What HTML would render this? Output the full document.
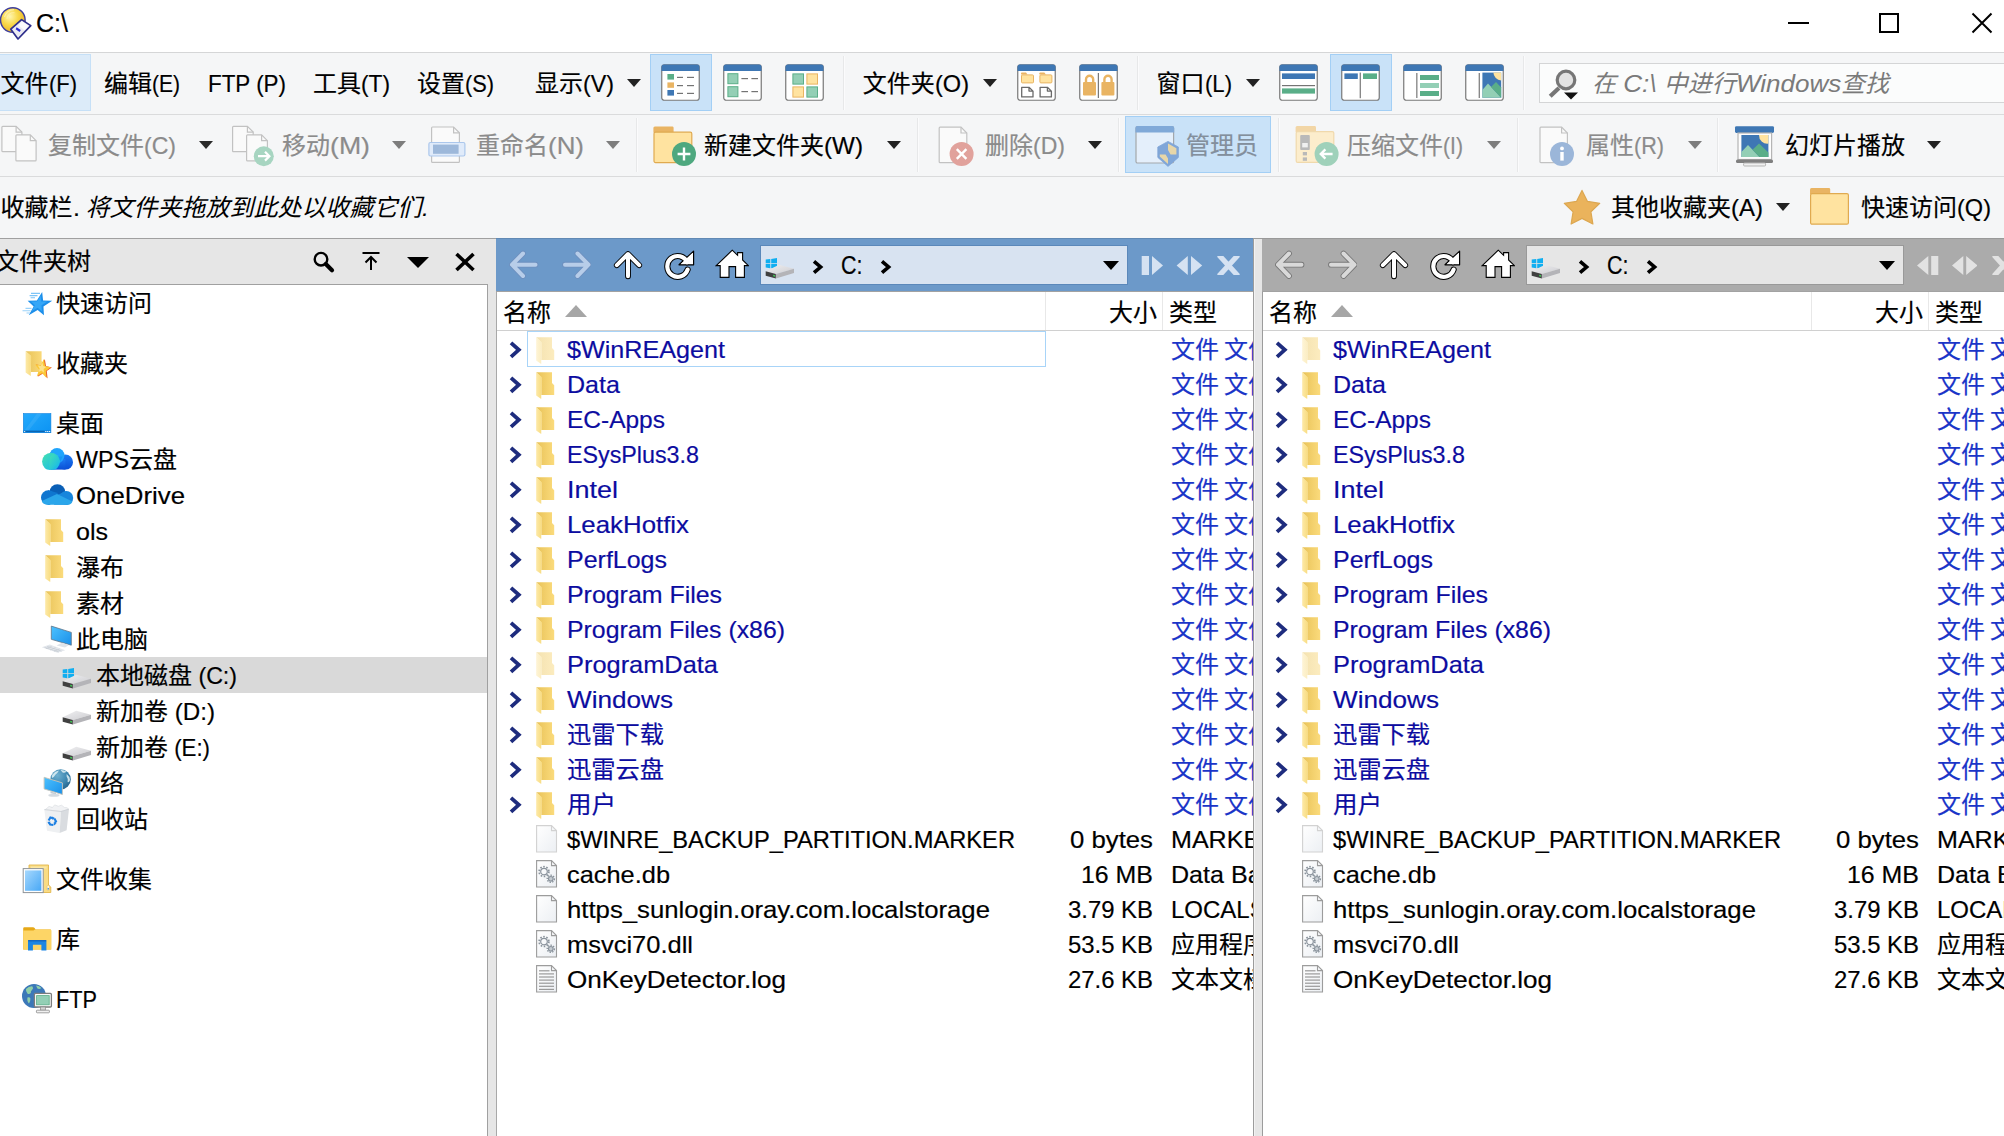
<!DOCTYPE html>
<html lang="zh-CN"><head><meta charset="utf-8"><title>C:\</title><style>
html,body{margin:0;padding:0;}
body{width:2004px;height:1136px;overflow:hidden;background:#fff;position:relative;font-family:'Liberation Sans','Noto Sans CJK SC',sans-serif;font-size:24px;}
.b{position:absolute;box-sizing:border-box;}
.t{position:absolute;height:32px;line-height:32px;white-space:pre;-webkit-text-stroke:0.18px currentColor;}
.r{position:absolute;top:0;transform-origin:0 0;white-space:pre;}
</style></head><body>
<svg width="0" height="0" style="position:absolute"><defs><linearGradient id="gdrv" x1="0" x2="1" y1="0" y2="1"><stop offset="0" stop-color="#f0f0f2"/><stop offset="1" stop-color="#cdcdd1"/></linearGradient></defs></svg><svg width="0" height="0" style="position:absolute"><defs>
<linearGradient id="gfb" x1="0" x2="1" y1="0" y2="0"><stop offset="0" stop-color="#e8c258"/><stop offset="1" stop-color="#fbdb7c"/></linearGradient>
<linearGradient id="gff" x1="0" x2="1" y1="0" y2="0"><stop offset="0" stop-color="#fde9a8"/><stop offset="1" stop-color="#f8dc80"/></linearGradient>
<linearGradient id="ghb" x1="0" x2="1" y1="0" y2="0"><stop offset="0" stop-color="#f4e2b0"/><stop offset="1" stop-color="#fcecbf"/></linearGradient>
<linearGradient id="ghf" x1="0" x2="1" y1="0" y2="0"><stop offset="0" stop-color="#fef4d6"/><stop offset="1" stop-color="#fbedc2"/></linearGradient>
<linearGradient id="gpg" x1="0" x2="1" y1="0" y2="1"><stop offset="0" stop-color="#ffffff"/><stop offset="1" stop-color="#eceff3"/></linearGradient>
</defs></svg><svg width="0" height="0" style="position:absolute"><defs>
<linearGradient id="gwps" x1="0" x2="1" y1="1" y2="0"><stop offset="0" stop-color="#2fe0c0"/><stop offset="0.45" stop-color="#1c9bf0"/><stop offset="1" stop-color="#1f5fe0"/></linearGradient>
<linearGradient id="gdesk" x1="0" x2="1" y1="0" y2="1"><stop offset="0" stop-color="#24aafc"/><stop offset="1" stop-color="#0c93f3"/></linearGradient>
<linearGradient id="gscr" x1="0" x2="1" y1="0" y2="1"><stop offset="0" stop-color="#4cc2ff"/><stop offset="1" stop-color="#1a8fe8"/></linearGradient>
<radialGradient id="gglobe" cx="0.4" cy="0.35" r="0.7"><stop offset="0" stop-color="#8fd0f5"/><stop offset="1" stop-color="#2f7fc0"/></radialGradient>
</defs></svg><svg width="0" height="0" style="position:absolute"><defs><clipPath id="cwps"><rect x="0" y="0" width="32" height="22.8" rx="0"/></clipPath><linearGradient id="gteal" x1="0" x2="1" y1="0" y2="1"><stop offset="0" stop-color="#45e2b0"/><stop offset="1" stop-color="#14b4f0"/></linearGradient><linearGradient id="gwb" x1="0" x2="0" y1="0" y2="1"><stop offset="0" stop-color="#1c7cf2"/><stop offset="1" stop-color="#0a4ed6"/></linearGradient></defs></svg><svg width="0" height="0" style="position:absolute"><defs><radialGradient id="gglb" cx="0.35" cy="0.3" r="0.8"><stop offset="0" stop-color="#6fb0d0"/><stop offset="0.6" stop-color="#3c86b0"/><stop offset="1" stop-color="#245f86"/></radialGradient></defs></svg><svg width="0" height="0" style="position:absolute"><defs><linearGradient id="gfc" x1="0" x2="1" y1="0" y2="1"><stop offset="0" stop-color="#a6d8fd"/><stop offset="1" stop-color="#48a8f6"/></linearGradient></defs></svg><svg width="0" height="0" style="position:absolute"><defs>
<radialGradient id="gdisc" cx="0.38" cy="0.36" r="0.75"><stop offset="0" stop-color="#fff6b0"/><stop offset="0.45" stop-color="#f8d84a"/><stop offset="1" stop-color="#e2a81c"/></radialGradient>
</defs></svg>
<div class="b" style="left:0px;top:0px;width:2004px;height:52px;background:#fff;"></div>
<div class="b" style="left:0px;top:52px;width:2004px;height:1px;background:#d5d6d7;"></div>
<div class="t" style="left:36.00px;top:7.30px;color:#000;font-size:26px;"><span class="r" style="left:0.00px;transform:scaleX(0.9629);">C:\</span></div>
<div class="b" style="left:1788px;top:22px;width:21px;height:2px;background:#000;"></div>
<div class="b" style="left:1879px;top:13px;width:20px;height:20px;border:2px solid #000;"></div>
<svg class="b" style="left:1971px;top:12px;" width="22" height="22" viewBox="0 0 22 22"><path d="M1.5 1.5 L20.5 20.5 M20.5 1.5 L1.5 20.5" stroke="#000" stroke-width="2" fill="none"/></svg>
<div class="b" style="left:0px;top:53px;width:2004px;height:185px;background:#f5f6f7;"></div>
<div class="b" style="left:0px;top:114px;width:2004px;height:1px;background:#dadbdc;"></div>
<div class="b" style="left:0px;top:176px;width:2004px;height:1px;background:#dadbdc;"></div>
<div class="b" style="left:0px;top:54px;width:91px;height:57px;background:#dcebf9;border:1px solid #c6e0f7;border-left:none;"></div>
<div class="t" style="left:0.60px;top:68.00px;color:#000;"><span class="r" style="left:0.00px;">文件</span><span class="r" style="left:48.00px;transform:scaleX(0.9134);">(F)</span></div>
<div class="t" style="left:104.00px;top:68.00px;color:#000;"><span class="r" style="left:0.00px;">编辑</span><span class="r" style="left:48.00px;transform:scaleX(0.8750);">(E)</span></div>
<div class="t" style="left:208.00px;top:68.00px;color:#000;"><span class="r" style="left:0.00px;transform:scaleX(0.9334);">FTP (P)</span></div>
<div class="t" style="left:313.00px;top:68.00px;color:#000;"><span class="r" style="left:0.00px;">工具</span><span class="r" style="left:48.00px;transform:scaleX(0.9460);">(T)</span></div>
<div class="t" style="left:417.00px;top:68.00px;color:#000;"><span class="r" style="left:0.00px;">设置</span><span class="r" style="left:48.00px;transform:scaleX(0.9062);">(S)</span></div>
<div class="t" style="left:535.00px;top:68.00px;color:#000;"><span class="r" style="left:0.00px;">显示</span><span class="r" style="left:48.00px;transform:scaleX(0.9688);">(V)</span></div>
<svg class="b" style="left:627px;top:79px;" width="14" height="8" viewBox="0 0 14 8"><path d="M0 0 H14 L7.0 8 Z" fill="#222"/></svg>
<div class="b" style="left:650px;top:54px;width:62px;height:57px;background:#c9e2f8;border:1px solid #a3cff5;"></div>
<div class="b" style="left:843px;top:56px;width:1px;height:54px;background:#e7e8e9;"></div>
<div class="b" style="left:844px;top:56px;width:1px;height:54px;background:#fbfbfc;"></div>
<div class="t" style="left:862.80px;top:68.00px;color:#000;"><span class="r" style="left:0.00px;">文件夹</span><span class="r" style="left:72.00px;transform:scaleX(0.9811);">(O)</span></div>
<svg class="b" style="left:983px;top:79px;" width="14" height="8" viewBox="0 0 14 8"><path d="M0 0 H14 L7.0 8 Z" fill="#222"/></svg>
<div class="b" style="left:1137px;top:56px;width:1px;height:54px;background:#e7e8e9;"></div>
<div class="b" style="left:1138px;top:56px;width:1px;height:54px;background:#fbfbfc;"></div>
<div class="t" style="left:1156.60px;top:68.00px;color:#000;"><span class="r" style="left:0.00px;">窗口</span><span class="r" style="left:48.00px;transform:scaleX(0.9201);">(L)</span></div>
<svg class="b" style="left:1246px;top:79px;" width="14" height="8" viewBox="0 0 14 8"><path d="M0 0 H14 L7.0 8 Z" fill="#222"/></svg>
<div class="b" style="left:1330px;top:54px;width:62px;height:57px;background:#c9e2f8;border:1px solid #a3cff5;"></div>
<div class="b" style="left:1523px;top:56px;width:1px;height:54px;background:#e7e8e9;"></div>
<div class="b" style="left:1524px;top:56px;width:1px;height:54px;background:#fbfbfc;"></div>
<div class="b" style="left:1539px;top:63px;width:480px;height:40px;background:#fbfcfc;border:1px solid #d4d5d6;"></div>
<div class="t" style="left:1592.00px;top:68.00px;color:#7a7a7a;font-style:italic;-webkit-text-stroke:0;"><span class="r" style="left:0.00px;">在</span><span class="r" style="left:24.00px;transform:scaleX(1.0838);"> C:\ </span><span class="r" style="left:71.70px;">中进行</span><span class="r" style="left:143.70px;transform:scaleX(1.0838);">Windows</span><span class="r" style="left:249.00px;">查找</span></div>
<div class="t" style="left:48.00px;top:130.00px;color:#8b8b8b;"><span class="r" style="left:0.00px;">复制文件</span><span class="r" style="left:96.00px;transform:scaleX(0.9602);">(C)</span></div>
<svg class="b" style="left:199px;top:141px;" width="14" height="8" viewBox="0 0 14 8"><path d="M0 0 H14 L7.0 8 Z" fill="#2a2a2a"/></svg>
<div class="t" style="left:282.00px;top:130.00px;color:#8b8b8b;"><span class="r" style="left:0.00px;">移动</span><span class="r" style="left:48.00px;transform:scaleX(1.1116);">(M)</span></div>
<svg class="b" style="left:392px;top:141px;" width="14" height="8" viewBox="0 0 14 8"><path d="M0 0 H14 L7.0 8 Z" fill="#7d7d7d"/></svg>
<div class="t" style="left:476.00px;top:130.00px;color:#8b8b8b;"><span class="r" style="left:0.00px;">重命名</span><span class="r" style="left:72.00px;transform:scaleX(1.0802);">(N)</span></div>
<svg class="b" style="left:606px;top:141px;" width="14" height="8" viewBox="0 0 14 8"><path d="M0 0 H14 L7.0 8 Z" fill="#7d7d7d"/></svg>
<div class="b" style="left:636px;top:118px;width:1px;height:54px;background:#e7e8e9;"></div>
<div class="b" style="left:637px;top:118px;width:1px;height:54px;background:#fbfbfc;"></div>
<div class="t" style="left:704.00px;top:130.00px;color:#000;"><span class="r" style="left:0.00px;">新建文件夹</span><span class="r" style="left:120.00px;transform:scaleX(1.0093);">(W)</span></div>
<svg class="b" style="left:887px;top:141px;" width="14" height="8" viewBox="0 0 14 8"><path d="M0 0 H14 L7.0 8 Z" fill="#222"/></svg>
<div class="b" style="left:917px;top:118px;width:1px;height:54px;background:#e7e8e9;"></div>
<div class="b" style="left:918px;top:118px;width:1px;height:54px;background:#fbfbfc;"></div>
<div class="t" style="left:985.00px;top:130.00px;color:#8b8b8b;"><span class="r" style="left:0.00px;">删除</span><span class="r" style="left:48.00px;transform:scaleX(0.9602);">(D)</span></div>
<svg class="b" style="left:1088px;top:141px;" width="14" height="8" viewBox="0 0 14 8"><path d="M0 0 H14 L7.0 8 Z" fill="#222"/></svg>
<div class="b" style="left:1118px;top:118px;width:1px;height:54px;background:#e7e8e9;"></div>
<div class="b" style="left:1119px;top:118px;width:1px;height:54px;background:#fbfbfc;"></div>
<div class="b" style="left:1125px;top:116px;width:146px;height:57px;background:#c9e2f8;border:1px solid #a3cff5;"></div>
<div class="t" style="left:1186.00px;top:130.00px;color:#838f9c;"><span class="r" style="left:0.00px;">管理员</span></div>
<div class="b" style="left:1278px;top:118px;width:1px;height:54px;background:#e7e8e9;"></div>
<div class="b" style="left:1279px;top:118px;width:1px;height:54px;background:#fbfbfc;"></div>
<div class="t" style="left:1347.00px;top:130.00px;color:#8b8b8b;"><span class="r" style="left:0.00px;">压缩文件</span><span class="r" style="left:96.00px;transform:scaleX(0.8828);">(I)</span></div>
<svg class="b" style="left:1487px;top:141px;" width="14" height="8" viewBox="0 0 14 8"><path d="M0 0 H14 L7.0 8 Z" fill="#7d7d7d"/></svg>
<div class="b" style="left:1517px;top:118px;width:1px;height:54px;background:#e7e8e9;"></div>
<div class="b" style="left:1518px;top:118px;width:1px;height:54px;background:#fbfbfc;"></div>
<div class="t" style="left:1586.00px;top:130.00px;color:#8b8b8b;"><span class="r" style="left:0.00px;">属性</span><span class="r" style="left:48.00px;transform:scaleX(0.9001);">(R)</span></div>
<svg class="b" style="left:1688px;top:141px;" width="14" height="8" viewBox="0 0 14 8"><path d="M0 0 H14 L7.0 8 Z" fill="#7d7d7d"/></svg>
<div class="b" style="left:1717px;top:118px;width:1px;height:54px;background:#e7e8e9;"></div>
<div class="b" style="left:1718px;top:118px;width:1px;height:54px;background:#fbfbfc;"></div>
<div class="t" style="left:1785.00px;top:130.00px;color:#000;"><span class="r" style="left:0.00px;">幻灯片播放</span></div>
<svg class="b" style="left:1927px;top:141px;" width="14" height="8" viewBox="0 0 14 8"><path d="M0 0 H14 L7.0 8 Z" fill="#222"/></svg>
<div class="t" style="left:0.60px;top:191.50px;color:#000;"><span class="r" style="left:0.00px;">收藏栏</span><span class="r" style="left:72.00px;transform:scaleX(1.0450);">. </span></div>
<div class="t" style="left:85.50px;top:191.50px;color:#000;font-style:italic;-webkit-text-stroke:0;"><span class="r" style="left:0.00px;">将文件夹拖放到此处以收藏它们</span><span class="r" style="left:336.00px;transform:scaleX(1.0450);">.</span></div>
<div class="t" style="left:1611.00px;top:191.50px;color:#000;"><span class="r" style="left:0.00px;">其他收藏夹</span><span class="r" style="left:120.00px;">(A)</span></div>
<svg class="b" style="left:1776px;top:203px;" width="14" height="8" viewBox="0 0 14 8"><path d="M0 0 H14 L7.0 8 Z" fill="#222"/></svg>
<div class="t" style="left:1861.00px;top:191.50px;color:#000;"><span class="r" style="left:0.00px;">快速访问</span><span class="r" style="left:96.00px;transform:scaleX(0.9811);">(Q)</span></div>
<div class="b" style="left:0px;top:238px;width:496px;height:1px;background:#a0a0a0;"></div>
<div class="b" style="left:0px;top:239px;width:496px;height:45px;background:#e6e6e6;"></div>
<div class="b" style="left:0px;top:284px;width:488px;height:1px;background:#a0a0a0;"></div>
<div class="b" style="left:0px;top:285px;width:487px;height:851px;background:#fff;"></div>
<div class="b" style="left:487px;top:284px;width:1px;height:852px;background:#a0a0a0;"></div>
<div class="b" style="left:488px;top:284px;width:8px;height:852px;background:#e6e6e6;"></div>
<div class="b" style="left:496px;top:292px;width:1px;height:844px;background:#a8a8a8;"></div>
<div class="t" style="left:-5.00px;top:245.50px;color:#000;"><span class="r" style="left:0.00px;">文件夹树</span></div>
<div class="b" style="left:0px;top:657px;width:487px;height:36px;background:#d9d9d9;"></div>
<div class="t" style="left:56.00px;top:287.90px;color:#000;"><span class="r" style="left:0.00px;">快速访问</span></div>
<div class="t" style="left:56.00px;top:347.90px;color:#000;"><span class="r" style="left:0.00px;">收藏夹</span></div>
<div class="t" style="left:56.00px;top:407.90px;color:#000;"><span class="r" style="left:0.00px;">桌面</span></div>
<div class="t" style="left:76.00px;top:443.90px;color:#000;"><span class="r" style="left:0.00px;transform:scaleX(0.9694);">WPS</span><span class="r" style="left:53.00px;">云盘</span></div>
<div class="t" style="left:76.00px;top:479.90px;color:#000;"><span class="r" style="left:0.00px;transform:scaleX(1.0752);">OneDrive</span></div>
<div class="t" style="left:76.00px;top:515.90px;color:#000;"><span class="r" style="left:0.00px;transform:scaleX(1.0428);">ols</span></div>
<div class="t" style="left:76.00px;top:551.90px;color:#000;"><span class="r" style="left:0.00px;">瀑布</span></div>
<div class="t" style="left:76.00px;top:587.90px;color:#000;"><span class="r" style="left:0.00px;">素材</span></div>
<div class="t" style="left:76.00px;top:623.90px;color:#000;"><span class="r" style="left:0.00px;">此电脑</span></div>
<div class="t" style="left:96.00px;top:659.90px;color:#000;"><span class="r" style="left:0.00px;">本地磁盘</span><span class="r" style="left:96.00px;transform:scaleX(0.9645);"> (C:)</span></div>
<div class="t" style="left:96.00px;top:695.90px;color:#000;"><span class="r" style="left:0.00px;">新加卷</span><span class="r" style="left:72.00px;transform:scaleX(1.0074);"> (D:)</span></div>
<div class="t" style="left:96.00px;top:731.90px;color:#000;"><span class="r" style="left:0.00px;">新加卷</span><span class="r" style="left:72.00px;transform:scaleX(0.9266);"> (E:)</span></div>
<div class="t" style="left:76.00px;top:767.90px;color:#000;"><span class="r" style="left:0.00px;">网络</span></div>
<div class="t" style="left:76.00px;top:803.90px;color:#000;"><span class="r" style="left:0.00px;">回收站</span></div>
<div class="t" style="left:56.00px;top:863.90px;color:#000;"><span class="r" style="left:0.00px;">文件收集</span></div>
<div class="t" style="left:56.00px;top:923.90px;color:#000;"><span class="r" style="left:0.00px;">库</span></div>
<div class="t" style="left:56.00px;top:983.90px;color:#000;"><span class="r" style="left:0.00px;transform:scaleX(0.9045);">FTP</span></div>
<div class="b" style="left:496px;top:238px;width:757px;height:54px;background:#6c99c9;"></div>
<div class="b" style="left:496px;top:238px;width:757px;height:1px;background:rgba(0,0,0,0.10);"></div>
<div class="b" style="left:496px;top:291px;width:757px;height:1px;background:#a2a2a2;"></div>
<div class="b" style="left:760px;top:245px;width:368px;height:40px;background:#d8e3f1;border:1px solid #5b88ba;"></div>
<div class="t" style="left:840.50px;top:248.70px;color:#000;font-size:26.5px;"><span class="r" style="left:0.00px;transform:scaleX(0.8113);">C:</span></div>
<div class="b" style="left:497px;top:292px;width:756px;height:844px;background:#fff;"></div>
<div class="b" style="left:497px;top:330px;width:756px;height:1px;background:#d0d0d0;"></div>
<div class="b" style="left:1045px;top:292px;width:1px;height:38px;background:#e8e8e8;"></div>
<div class="b" style="left:1162px;top:292px;width:1px;height:38px;background:#e8e8e8;"></div>
<div class="t" style="left:503.00px;top:297.10px;color:#000;"><span class="r" style="left:0.00px;">名称</span></div>
<div class="t" style="left:1109.00px;top:297.10px;color:#000;"><span class="r" style="left:0.00px;">大小</span></div>
<div class="t" style="left:1169.00px;top:297.10px;color:#000;width:84.00px;overflow:hidden;"><span class="r" style="left:0.00px;">类型</span></div>
<svg class="b" style="left:565px;top:305px;" width="22" height="12" viewBox="0 0 22 12"><path d="M0 12 L11 0 L22 12 Z" fill="#a6a6a6"/></svg>
<div class="b" style="left:527px;top:331px;width:519px;height:36px;background:#fff;border:1px solid #a8d4f8;"></div>
<div class="t" style="left:566.50px;top:334.00px;color:#0c0ca0;"><span class="r" style="left:0.00px;transform:scaleX(1.0481);">$WinREAgent</span></div>
<div class="t" style="left:1171.00px;top:334.00px;color:#1a35c8;width:82.00px;overflow:hidden;"><span class="r" style="left:0.00px;">文件</span><span class="r" style="left:48.00px;transform:scaleX(0.7494);"> </span><span class="r" style="left:53.00px;">文件夹</span></div>
<div class="t" style="left:566.50px;top:369.00px;color:#0c0ca0;"><span class="r" style="left:0.00px;transform:scaleX(1.0453);">Data</span></div>
<div class="t" style="left:1171.00px;top:369.00px;color:#1a35c8;width:82.00px;overflow:hidden;"><span class="r" style="left:0.00px;">文件</span><span class="r" style="left:48.00px;transform:scaleX(0.7494);"> </span><span class="r" style="left:53.00px;">文件夹</span></div>
<div class="t" style="left:566.50px;top:404.00px;color:#0c0ca0;"><span class="r" style="left:0.00px;transform:scaleX(1.0203);">EC-Apps</span></div>
<div class="t" style="left:1171.00px;top:404.00px;color:#1a35c8;width:82.00px;overflow:hidden;"><span class="r" style="left:0.00px;">文件</span><span class="r" style="left:48.00px;transform:scaleX(0.7494);"> </span><span class="r" style="left:53.00px;">文件夹</span></div>
<div class="t" style="left:566.50px;top:439.00px;color:#0c0ca0;"><span class="r" style="left:0.00px;transform:scaleX(0.9700);">ESysPlus3.8</span></div>
<div class="t" style="left:1171.00px;top:439.00px;color:#1a35c8;width:82.00px;overflow:hidden;"><span class="r" style="left:0.00px;">文件</span><span class="r" style="left:48.00px;transform:scaleX(0.7494);"> </span><span class="r" style="left:53.00px;">文件夹</span></div>
<div class="t" style="left:566.50px;top:474.00px;color:#0c0ca0;"><span class="r" style="left:0.00px;transform:scaleX(1.1240);">Intel</span></div>
<div class="t" style="left:1171.00px;top:474.00px;color:#1a35c8;width:82.00px;overflow:hidden;"><span class="r" style="left:0.00px;">文件</span><span class="r" style="left:48.00px;transform:scaleX(0.7494);"> </span><span class="r" style="left:53.00px;">文件夹</span></div>
<div class="t" style="left:566.50px;top:509.00px;color:#0c0ca0;"><span class="r" style="left:0.00px;transform:scaleX(1.0759);">LeakHotfix</span></div>
<div class="t" style="left:1171.00px;top:509.00px;color:#1a35c8;width:82.00px;overflow:hidden;"><span class="r" style="left:0.00px;">文件</span><span class="r" style="left:48.00px;transform:scaleX(0.7494);"> </span><span class="r" style="left:53.00px;">文件夹</span></div>
<div class="t" style="left:566.50px;top:544.00px;color:#0c0ca0;"><span class="r" style="left:0.00px;transform:scaleX(1.0410);">PerfLogs</span></div>
<div class="t" style="left:1171.00px;top:544.00px;color:#1a35c8;width:82.00px;overflow:hidden;"><span class="r" style="left:0.00px;">文件</span><span class="r" style="left:48.00px;transform:scaleX(0.7494);"> </span><span class="r" style="left:53.00px;">文件夹</span></div>
<div class="t" style="left:566.50px;top:579.00px;color:#0c0ca0;"><span class="r" style="left:0.00px;transform:scaleX(1.0377);">Program Files</span></div>
<div class="t" style="left:1171.00px;top:579.00px;color:#1a35c8;width:82.00px;overflow:hidden;"><span class="r" style="left:0.00px;">文件</span><span class="r" style="left:48.00px;transform:scaleX(0.7494);"> </span><span class="r" style="left:53.00px;">文件夹</span></div>
<div class="t" style="left:566.50px;top:614.00px;color:#0c0ca0;"><span class="r" style="left:0.00px;transform:scaleX(1.0346);">Program Files (x86)</span></div>
<div class="t" style="left:1171.00px;top:614.00px;color:#1a35c8;width:82.00px;overflow:hidden;"><span class="r" style="left:0.00px;">文件</span><span class="r" style="left:48.00px;transform:scaleX(0.7494);"> </span><span class="r" style="left:53.00px;">文件夹</span></div>
<div class="t" style="left:566.50px;top:649.00px;color:#0c0ca0;"><span class="r" style="left:0.00px;transform:scaleX(1.0579);">ProgramData</span></div>
<div class="t" style="left:1171.00px;top:649.00px;color:#1a35c8;width:82.00px;overflow:hidden;"><span class="r" style="left:0.00px;">文件</span><span class="r" style="left:48.00px;transform:scaleX(0.7494);"> </span><span class="r" style="left:53.00px;">文件夹</span></div>
<div class="t" style="left:566.50px;top:684.00px;color:#0c0ca0;"><span class="r" style="left:0.00px;transform:scaleX(1.0887);">Windows</span></div>
<div class="t" style="left:1171.00px;top:684.00px;color:#1a35c8;width:82.00px;overflow:hidden;"><span class="r" style="left:0.00px;">文件</span><span class="r" style="left:48.00px;transform:scaleX(0.7494);"> </span><span class="r" style="left:53.00px;">文件夹</span></div>
<div class="t" style="left:566.50px;top:719.00px;color:#0c0ca0;"><span class="r" style="left:0.00px;transform:scaleX(1.0104);">迅雷下载</span></div>
<div class="t" style="left:1171.00px;top:719.00px;color:#1a35c8;width:82.00px;overflow:hidden;"><span class="r" style="left:0.00px;">文件</span><span class="r" style="left:48.00px;transform:scaleX(0.7494);"> </span><span class="r" style="left:53.00px;">文件夹</span></div>
<div class="t" style="left:566.50px;top:754.00px;color:#0c0ca0;"><span class="r" style="left:0.00px;transform:scaleX(1.0104);">迅雷云盘</span></div>
<div class="t" style="left:1171.00px;top:754.00px;color:#1a35c8;width:82.00px;overflow:hidden;"><span class="r" style="left:0.00px;">文件</span><span class="r" style="left:48.00px;transform:scaleX(0.7494);"> </span><span class="r" style="left:53.00px;">文件夹</span></div>
<div class="t" style="left:566.50px;top:789.00px;color:#0c0ca0;"><span class="r" style="left:0.00px;transform:scaleX(1.0208);">用户</span></div>
<div class="t" style="left:1171.00px;top:789.00px;color:#1a35c8;width:82.00px;overflow:hidden;"><span class="r" style="left:0.00px;">文件</span><span class="r" style="left:48.00px;transform:scaleX(0.7494);"> </span><span class="r" style="left:53.00px;">文件夹</span></div>
<div class="t" style="left:566.50px;top:824.00px;color:#000;"><span class="r" style="left:0.00px;transform:scaleX(0.9871);">$WINRE_BACKUP_PARTITION.MARKER</span></div>
<div class="t" style="left:1070.00px;top:824.00px;color:#000;"><span class="r" style="left:0.00px;transform:scaleX(1.0725);">0 bytes</span></div>
<div class="t" style="left:1171.00px;top:824.00px;color:#000;width:82.00px;overflow:hidden;"><span class="r" style="left:0.00px;transform:scaleX(1.0450);">MARKER </span><span class="r" style="left:114.28px;">文件</span></div>
<div class="t" style="left:566.50px;top:859.00px;color:#000;"><span class="r" style="left:0.00px;transform:scaleX(1.0574);">cache.db</span></div>
<div class="t" style="left:1081.00px;top:859.00px;color:#000;"><span class="r" style="left:0.00px;transform:scaleX(1.0378);">16 MB</span></div>
<div class="t" style="left:1171.00px;top:859.00px;color:#000;width:82.00px;overflow:hidden;"><span class="r" style="left:0.00px;transform:scaleX(1.0450);">Data Base File</span></div>
<div class="t" style="left:566.50px;top:894.00px;color:#000;"><span class="r" style="left:0.00px;transform:scaleX(1.0724);">https_sunlogin.oray.com.localstorage</span></div>
<div class="t" style="left:1068.00px;top:894.00px;color:#000;"><span class="r" style="left:0.00px;transform:scaleX(0.9952);">3.79 KB</span></div>
<div class="t" style="left:1171.00px;top:894.00px;color:#000;width:82.00px;overflow:hidden;"><span class="r" style="left:0.00px;">LOCALSTORAGE </span><span class="r" style="left:202.30px;">文件</span></div>
<div class="t" style="left:566.50px;top:929.00px;color:#000;"><span class="r" style="left:0.00px;transform:scaleX(1.0615);">msvci70.dll</span></div>
<div class="t" style="left:1068.00px;top:929.00px;color:#000;"><span class="r" style="left:0.00px;transform:scaleX(0.9952);">53.5 KB</span></div>
<div class="t" style="left:1171.00px;top:929.00px;color:#000;width:82.00px;overflow:hidden;"><span class="r" style="left:0.00px;">应用程序扩展</span></div>
<div class="t" style="left:566.50px;top:964.00px;color:#000;"><span class="r" style="left:0.00px;transform:scaleX(1.0871);">OnKeyDetector.log</span></div>
<div class="t" style="left:1068.00px;top:964.00px;color:#000;"><span class="r" style="left:0.00px;transform:scaleX(0.9952);">27.6 KB</span></div>
<div class="t" style="left:1171.00px;top:964.00px;color:#000;width:82.00px;overflow:hidden;"><span class="r" style="left:0.00px;">文本文档</span></div>
<div class="b" style="left:1253px;top:238px;width:10px;height:898px;background:#e6e6e6;border:1px solid #9c9c9c;border-bottom:none;"></div>
<div class="b" style="left:1254px;top:239px;width:1px;height:897px;background:#f2f2f2;"></div>
<div class="b" style="left:1262px;top:238px;width:742px;height:54px;background:#ababab;"></div>
<div class="b" style="left:1262px;top:238px;width:742px;height:1px;background:rgba(0,0,0,0.10);"></div>
<div class="b" style="left:1262px;top:291px;width:742px;height:1px;background:#a2a2a2;"></div>
<div class="b" style="left:1526px;top:245px;width:378px;height:40px;background:#e6e6e6;border:1px solid #999;"></div>
<div class="t" style="left:1606.50px;top:248.70px;color:#000;font-size:26.5px;"><span class="r" style="left:0.00px;transform:scaleX(0.8113);">C:</span></div>
<div class="b" style="left:1263px;top:292px;width:741px;height:844px;background:#fff;"></div>
<div class="b" style="left:1263px;top:330px;width:741px;height:1px;background:#d0d0d0;"></div>
<div class="b" style="left:1811px;top:292px;width:1px;height:38px;background:#e8e8e8;"></div>
<div class="b" style="left:1928px;top:292px;width:1px;height:38px;background:#e8e8e8;"></div>
<div class="t" style="left:1269.00px;top:297.10px;color:#000;"><span class="r" style="left:0.00px;">名称</span></div>
<div class="t" style="left:1875.00px;top:297.10px;color:#000;"><span class="r" style="left:0.00px;">大小</span></div>
<div class="t" style="left:1935.00px;top:297.10px;color:#000;width:69.00px;overflow:hidden;"><span class="r" style="left:0.00px;">类型</span></div>
<svg class="b" style="left:1331px;top:305px;" width="22" height="12" viewBox="0 0 22 12"><path d="M0 12 L11 0 L22 12 Z" fill="#a6a6a6"/></svg>
<div class="t" style="left:1332.50px;top:334.00px;color:#0c0ca0;"><span class="r" style="left:0.00px;transform:scaleX(1.0481);">$WinREAgent</span></div>
<div class="t" style="left:1937.00px;top:334.00px;color:#1a35c8;width:67.00px;overflow:hidden;"><span class="r" style="left:0.00px;">文件</span><span class="r" style="left:48.00px;transform:scaleX(0.7494);"> </span><span class="r" style="left:53.00px;">文件夹</span></div>
<div class="t" style="left:1332.50px;top:369.00px;color:#0c0ca0;"><span class="r" style="left:0.00px;transform:scaleX(1.0453);">Data</span></div>
<div class="t" style="left:1937.00px;top:369.00px;color:#1a35c8;width:67.00px;overflow:hidden;"><span class="r" style="left:0.00px;">文件</span><span class="r" style="left:48.00px;transform:scaleX(0.7494);"> </span><span class="r" style="left:53.00px;">文件夹</span></div>
<div class="t" style="left:1332.50px;top:404.00px;color:#0c0ca0;"><span class="r" style="left:0.00px;transform:scaleX(1.0203);">EC-Apps</span></div>
<div class="t" style="left:1937.00px;top:404.00px;color:#1a35c8;width:67.00px;overflow:hidden;"><span class="r" style="left:0.00px;">文件</span><span class="r" style="left:48.00px;transform:scaleX(0.7494);"> </span><span class="r" style="left:53.00px;">文件夹</span></div>
<div class="t" style="left:1332.50px;top:439.00px;color:#0c0ca0;"><span class="r" style="left:0.00px;transform:scaleX(0.9700);">ESysPlus3.8</span></div>
<div class="t" style="left:1937.00px;top:439.00px;color:#1a35c8;width:67.00px;overflow:hidden;"><span class="r" style="left:0.00px;">文件</span><span class="r" style="left:48.00px;transform:scaleX(0.7494);"> </span><span class="r" style="left:53.00px;">文件夹</span></div>
<div class="t" style="left:1332.50px;top:474.00px;color:#0c0ca0;"><span class="r" style="left:0.00px;transform:scaleX(1.1240);">Intel</span></div>
<div class="t" style="left:1937.00px;top:474.00px;color:#1a35c8;width:67.00px;overflow:hidden;"><span class="r" style="left:0.00px;">文件</span><span class="r" style="left:48.00px;transform:scaleX(0.7494);"> </span><span class="r" style="left:53.00px;">文件夹</span></div>
<div class="t" style="left:1332.50px;top:509.00px;color:#0c0ca0;"><span class="r" style="left:0.00px;transform:scaleX(1.0759);">LeakHotfix</span></div>
<div class="t" style="left:1937.00px;top:509.00px;color:#1a35c8;width:67.00px;overflow:hidden;"><span class="r" style="left:0.00px;">文件</span><span class="r" style="left:48.00px;transform:scaleX(0.7494);"> </span><span class="r" style="left:53.00px;">文件夹</span></div>
<div class="t" style="left:1332.50px;top:544.00px;color:#0c0ca0;"><span class="r" style="left:0.00px;transform:scaleX(1.0410);">PerfLogs</span></div>
<div class="t" style="left:1937.00px;top:544.00px;color:#1a35c8;width:67.00px;overflow:hidden;"><span class="r" style="left:0.00px;">文件</span><span class="r" style="left:48.00px;transform:scaleX(0.7494);"> </span><span class="r" style="left:53.00px;">文件夹</span></div>
<div class="t" style="left:1332.50px;top:579.00px;color:#0c0ca0;"><span class="r" style="left:0.00px;transform:scaleX(1.0377);">Program Files</span></div>
<div class="t" style="left:1937.00px;top:579.00px;color:#1a35c8;width:67.00px;overflow:hidden;"><span class="r" style="left:0.00px;">文件</span><span class="r" style="left:48.00px;transform:scaleX(0.7494);"> </span><span class="r" style="left:53.00px;">文件夹</span></div>
<div class="t" style="left:1332.50px;top:614.00px;color:#0c0ca0;"><span class="r" style="left:0.00px;transform:scaleX(1.0346);">Program Files (x86)</span></div>
<div class="t" style="left:1937.00px;top:614.00px;color:#1a35c8;width:67.00px;overflow:hidden;"><span class="r" style="left:0.00px;">文件</span><span class="r" style="left:48.00px;transform:scaleX(0.7494);"> </span><span class="r" style="left:53.00px;">文件夹</span></div>
<div class="t" style="left:1332.50px;top:649.00px;color:#0c0ca0;"><span class="r" style="left:0.00px;transform:scaleX(1.0579);">ProgramData</span></div>
<div class="t" style="left:1937.00px;top:649.00px;color:#1a35c8;width:67.00px;overflow:hidden;"><span class="r" style="left:0.00px;">文件</span><span class="r" style="left:48.00px;transform:scaleX(0.7494);"> </span><span class="r" style="left:53.00px;">文件夹</span></div>
<div class="t" style="left:1332.50px;top:684.00px;color:#0c0ca0;"><span class="r" style="left:0.00px;transform:scaleX(1.0887);">Windows</span></div>
<div class="t" style="left:1937.00px;top:684.00px;color:#1a35c8;width:67.00px;overflow:hidden;"><span class="r" style="left:0.00px;">文件</span><span class="r" style="left:48.00px;transform:scaleX(0.7494);"> </span><span class="r" style="left:53.00px;">文件夹</span></div>
<div class="t" style="left:1332.50px;top:719.00px;color:#0c0ca0;"><span class="r" style="left:0.00px;transform:scaleX(1.0104);">迅雷下载</span></div>
<div class="t" style="left:1937.00px;top:719.00px;color:#1a35c8;width:67.00px;overflow:hidden;"><span class="r" style="left:0.00px;">文件</span><span class="r" style="left:48.00px;transform:scaleX(0.7494);"> </span><span class="r" style="left:53.00px;">文件夹</span></div>
<div class="t" style="left:1332.50px;top:754.00px;color:#0c0ca0;"><span class="r" style="left:0.00px;transform:scaleX(1.0104);">迅雷云盘</span></div>
<div class="t" style="left:1937.00px;top:754.00px;color:#1a35c8;width:67.00px;overflow:hidden;"><span class="r" style="left:0.00px;">文件</span><span class="r" style="left:48.00px;transform:scaleX(0.7494);"> </span><span class="r" style="left:53.00px;">文件夹</span></div>
<div class="t" style="left:1332.50px;top:789.00px;color:#0c0ca0;"><span class="r" style="left:0.00px;transform:scaleX(1.0208);">用户</span></div>
<div class="t" style="left:1937.00px;top:789.00px;color:#1a35c8;width:67.00px;overflow:hidden;"><span class="r" style="left:0.00px;">文件</span><span class="r" style="left:48.00px;transform:scaleX(0.7494);"> </span><span class="r" style="left:53.00px;">文件夹</span></div>
<div class="t" style="left:1332.50px;top:824.00px;color:#000;"><span class="r" style="left:0.00px;transform:scaleX(0.9871);">$WINRE_BACKUP_PARTITION.MARKER</span></div>
<div class="t" style="left:1836.00px;top:824.00px;color:#000;"><span class="r" style="left:0.00px;transform:scaleX(1.0725);">0 bytes</span></div>
<div class="t" style="left:1937.00px;top:824.00px;color:#000;width:67.00px;overflow:hidden;"><span class="r" style="left:0.00px;transform:scaleX(1.0450);">MARKER </span><span class="r" style="left:114.28px;">文件</span></div>
<div class="t" style="left:1332.50px;top:859.00px;color:#000;"><span class="r" style="left:0.00px;transform:scaleX(1.0574);">cache.db</span></div>
<div class="t" style="left:1847.00px;top:859.00px;color:#000;"><span class="r" style="left:0.00px;transform:scaleX(1.0378);">16 MB</span></div>
<div class="t" style="left:1937.00px;top:859.00px;color:#000;width:67.00px;overflow:hidden;"><span class="r" style="left:0.00px;transform:scaleX(1.0450);">Data Base File</span></div>
<div class="t" style="left:1332.50px;top:894.00px;color:#000;"><span class="r" style="left:0.00px;transform:scaleX(1.0724);">https_sunlogin.oray.com.localstorage</span></div>
<div class="t" style="left:1834.00px;top:894.00px;color:#000;"><span class="r" style="left:0.00px;transform:scaleX(0.9952);">3.79 KB</span></div>
<div class="t" style="left:1937.00px;top:894.00px;color:#000;width:67.00px;overflow:hidden;"><span class="r" style="left:0.00px;">LOCALSTORAGE </span><span class="r" style="left:202.30px;">文件</span></div>
<div class="t" style="left:1332.50px;top:929.00px;color:#000;"><span class="r" style="left:0.00px;transform:scaleX(1.0615);">msvci70.dll</span></div>
<div class="t" style="left:1834.00px;top:929.00px;color:#000;"><span class="r" style="left:0.00px;transform:scaleX(0.9952);">53.5 KB</span></div>
<div class="t" style="left:1937.00px;top:929.00px;color:#000;width:67.00px;overflow:hidden;"><span class="r" style="left:0.00px;">应用程序扩展</span></div>
<div class="t" style="left:1332.50px;top:964.00px;color:#000;"><span class="r" style="left:0.00px;transform:scaleX(1.0871);">OnKeyDetector.log</span></div>
<div class="t" style="left:1834.00px;top:964.00px;color:#000;"><span class="r" style="left:0.00px;transform:scaleX(0.9952);">27.6 KB</span></div>
<div class="t" style="left:1937.00px;top:964.00px;color:#000;width:67.00px;overflow:hidden;"><span class="r" style="left:0.00px;">文本文档</span></div>
<svg class="b" style="left:661px;top:64px;" width="39" height="37" viewBox="0 0 39 37"><rect x="0.75" y="0.75" width="37.5" height="35.5" rx="2.5" fill="#fff" stroke="#787878" stroke-width="1.2"/><path d="M0.5 7 V3 Q0.5 0.5 3 0.5 H36 Q38.5 0.5 38.5 3 V7 Z" fill="#3e77b4"/><rect x="6.4" y="10" width="6.6" height="5.6" fill="#5aae88"/><rect x="6.4" y="18.4" width="6.6" height="5.4" fill="#e9b463"/><rect x="6.4" y="26" width="6.6" height="5.6" fill="#3e77b4"/><rect x="16" y="12.8" width="6" height="1.2" fill="#747474"/><rect x="26" y="12.8" width="7" height="1.2" fill="#747474"/><rect x="16" y="21.0" width="6" height="1.2" fill="#747474"/><rect x="26" y="21.0" width="7" height="1.2" fill="#747474"/><rect x="16" y="28.799999999999997" width="6" height="1.2" fill="#747474"/><rect x="26" y="28.799999999999997" width="7" height="1.2" fill="#747474"/></svg>
<svg class="b" style="left:723px;top:64px;" width="39" height="37" viewBox="0 0 39 37"><rect x="0.75" y="0.75" width="37.5" height="35.5" rx="2.5" fill="#fff" stroke="#787878" stroke-width="1.2"/><path d="M0.5 7 V3 Q0.5 0.5 3 0.5 H36 Q38.5 0.5 38.5 3 V7 Z" fill="#3e77b4"/><rect x="4.9" y="9.7" width="10" height="10" fill="#93cfb5" stroke="#5aae88" stroke-width="1"/><rect x="4.9" y="22.7" width="10" height="10" fill="#93cfb5" stroke="#5aae88" stroke-width="1"/><rect x="18.4" y="14.0" width="6.600000000000001" height="1.2" fill="#747474"/><rect x="28.4" y="14.0" width="6.600000000000001" height="1.2" fill="#747474"/><rect x="18.4" y="27.0" width="6.600000000000001" height="1.2" fill="#747474"/><rect x="28.4" y="27.0" width="6.600000000000001" height="1.2" fill="#747474"/></svg>
<svg class="b" style="left:785px;top:64px;" width="39" height="37" viewBox="0 0 39 37"><rect x="0.75" y="0.75" width="37.5" height="35.5" rx="2.5" fill="#fff" stroke="#787878" stroke-width="1.2"/><path d="M0.5 7 V3 Q0.5 0.5 3 0.5 H36 Q38.5 0.5 38.5 3 V7 Z" fill="#3e77b4"/><rect x="7.9" y="9.9" width="10.6" height="10.2" fill="#93cfb5" stroke="#5aae88"/><rect x="21.9" y="9.9" width="10.6" height="10.2" fill="#ffe3a0" stroke="#e9b463"/><rect x="7.9" y="22.9" width="10.6" height="10.2" fill="#ffe3a0" stroke="#e9b463"/><rect x="21.9" y="22.9" width="10.6" height="10.2" fill="#93cfb5" stroke="#5aae88"/></svg>
<svg class="b" style="left:1017px;top:64px;" width="39" height="37" viewBox="0 0 39 37"><rect x="0.75" y="0.75" width="37.5" height="35.5" rx="2.5" fill="#fff" stroke="#787878" stroke-width="1.2"/><path d="M0.5 7 V3 Q0.5 0.5 3 0.5 H36 Q38.5 0.5 38.5 3 V7 Z" fill="#3e77b4"/><path d="M4 10.4 V9.200000000000001 Q4 8.4 4.8 8.4 H9 L10.5 10.4 Z" fill="#e9b463"/><rect x="4.5" y="10.9" width="12" height="8" rx="1" fill="#ffe3a0" stroke="#e9b463"/><path d="M22.4 10.4 V9.200000000000001 Q22.4 8.4 23.2 8.4 H27.4 L28.9 10.4 Z" fill="#e9b463"/><rect x="22.9" y="10.9" width="12" height="8" rx="1" fill="#ffe3a0" stroke="#e9b463"/><path d="M4.7 23.3 H12 L16 27.1 V32.900000000000006 H4.7 Z M12 23.3 V27.1 H16" fill="#fff" stroke="#6a6a6a" stroke-width="1.3" stroke-linejoin="round"/><path d="M23.099999999999998 23.3 H30.4 L34.4 27.1 V32.900000000000006 H23.099999999999998 Z M30.4 23.3 V27.1 H34.4" fill="#fff" stroke="#6a6a6a" stroke-width="1.3" stroke-linejoin="round"/></svg>
<svg class="b" style="left:1079px;top:64px;" width="39" height="37" viewBox="0 0 39 37"><rect x="0.75" y="0.75" width="37.5" height="35.5" rx="2.5" fill="#fff" stroke="#787878" stroke-width="1.2"/><path d="M0.5 7 V3 Q0.5 0.5 3 0.5 H36 Q38.5 0.5 38.5 3 V7 Z" fill="#3e77b4"/><path d="M7 18.5 V15.5 A3.6 3.8 0 0 1 14.2 15.5 V18.5" fill="none" stroke="#e9b463" stroke-width="2.4"/><rect x="4" y="18" width="13" height="13.6" rx="1" fill="#e9b463"/><path d="M25.4 18.5 V15.5 A3.6 3.8 0 0 1 32.599999999999994 15.5 V18.5" fill="none" stroke="#e9b463" stroke-width="2.4"/><rect x="22.4" y="18" width="13" height="13.6" rx="1" fill="#e9b463"/><rect x="18.8" y="9" width="1.1" height="25" fill="#6c6c6c"/></svg>
<svg class="b" style="left:1279px;top:64px;" width="39" height="37" viewBox="0 0 39 37"><rect x="0.75" y="0.75" width="37.5" height="35.5" rx="2.5" fill="#fff" stroke="#787878" stroke-width="1.2"/><path d="M0.5 7 V3 Q0.5 0.5 3 0.5 H36 Q38.5 0.5 38.5 3 V7 Z" fill="#3e77b4"/><rect x="3" y="9.4" width="33" height="5.6" fill="#3e77b4"/><rect x="3" y="21.0" width="33" height="1.2" fill="#747474"/><rect x="3" y="24.4" width="33" height="5.2" fill="#5aae88"/></svg>
<svg class="b" style="left:1341px;top:64px;" width="39" height="37" viewBox="0 0 39 37"><rect x="0.75" y="0.75" width="37.5" height="35.5" rx="2.5" fill="#fff" stroke="#787878" stroke-width="1.2"/><path d="M0.5 7 V3 Q0.5 0.5 3 0.5 H36 Q38.5 0.5 38.5 3 V7 Z" fill="#3e77b4"/><rect x="3.4" y="9.4" width="13.4" height="5.6" fill="#3e77b4"/><rect x="22" y="9.4" width="14" height="5.6" fill="#5aae88"/><rect x="18.7" y="8.6" width="1.1" height="25.6" fill="#6c6c6c"/></svg>
<svg class="b" style="left:1403px;top:64px;" width="39" height="37" viewBox="0 0 39 37"><rect x="0.75" y="0.75" width="37.5" height="35.5" rx="2.5" fill="#fff" stroke="#787878" stroke-width="1.2"/><path d="M0.5 7 V3 Q0.5 0.5 3 0.5 H36 Q38.5 0.5 38.5 3 V7 Z" fill="#3e77b4"/><rect x="13.3" y="9" width="1.1" height="25" fill="#6c6c6c"/><rect x="17" y="11" width="19" height="5" fill="#5aae88"/><rect x="17" y="19" width="19" height="5" fill="#93cfb5"/><rect x="17" y="27" width="19" height="5" fill="#5aae88"/></svg>
<svg class="b" style="left:1465px;top:64px;" width="39" height="37" viewBox="0 0 39 37"><rect x="0.75" y="0.75" width="37.5" height="35.5" rx="2.5" fill="#fff" stroke="#787878" stroke-width="1.2"/><path d="M0.5 7 V3 Q0.5 0.5 3 0.5 H36 Q38.5 0.5 38.5 3 V7 Z" fill="#3e77b4"/><rect x="13.7" y="9" width="1.1" height="25" fill="#6c6c6c"/><rect x="17.4" y="8.6" width="18.8" height="25.2" fill="#3e77b4"/><path d="M28.4 8.6 A8 8 0 0 0 36.2 16.4 V8.6 Z" fill="#ffe3a0"/><path d="M17.4 33.8 V26 L23 19.5 L36.2 33.8 Z" fill="#93cfb5"/><path d="M26 23 L31 18 L36.2 23.5 V33.8 Z" fill="#5aae88"/></svg>
<svg class="b" style="left:1547px;top:68px;" width="34" height="34" viewBox="0 0 34 34"><path d="M12 20 L3.2 28.2" stroke="#767676" stroke-width="4.2" stroke-linecap="butt"/><circle cx="19" cy="12" r="8.8" fill="#e2e2e2" stroke="#767676" stroke-width="3.2"/><path d="M17 24.6 H31 L24 31.5 Z" fill="#111"/></svg>
<svg class="b" style="left:0px;top:123px;" width="44" height="42" viewBox="0 0 44 42"><path d="M2.8 3.3000000000000003 H16.1 L21.9 9.100000000000001 V27.8 Q21.9 28.7 21.0 28.7 H2.8 Q1.9 28.7 1.9 27.8 V4.2 Q1.9 3.3000000000000003 2.8 3.3000000000000003 Z" fill="#fafafa" stroke="#c2c2c2" stroke-width="1.2"/><path d="M16.1 3.3000000000000003 V9.100000000000001 H21.9" fill="none" stroke="#c2c2c2" stroke-width="1.2"/><path d="M16.8 11.9 H30.300000000000004 L36.1 17.700000000000003 V37.0 Q36.1 37.9 35.2 37.9 H16.8 Q15.9 37.9 15.9 37.0 V12.8 Q15.9 11.9 16.8 11.9 Z" fill="#fafafa" stroke="#c2c2c2" stroke-width="1.2"/><path d="M30.300000000000004 11.9 V17.700000000000003 H36.1" fill="none" stroke="#c2c2c2" stroke-width="1.2"/></svg>
<svg class="b" style="left:230px;top:123px;" width="44" height="44" viewBox="0 0 44 44"><path d="M3.5 3.3000000000000003 H17.4 L23.2 9.100000000000001 V27.8 Q23.2 28.7 22.3 28.7 H3.5 Q2.6 28.7 2.6 27.8 V4.2 Q2.6 3.3000000000000003 3.5 3.3000000000000003 Z" fill="#fafafa" stroke="#c2c2c2" stroke-width="1.2"/><path d="M17.4 3.3000000000000003 V9.100000000000001 H23.2" fill="none" stroke="#c2c2c2" stroke-width="1.2"/><path d="M17.5 11.9 H31.6 L37.4 17.700000000000003 V37.0 Q37.4 37.9 36.5 37.9 H17.5 Q16.6 37.9 16.6 37.0 V12.8 Q16.6 11.9 17.5 11.9 Z" fill="#fafafa" stroke="#c2c2c2" stroke-width="1.2"/><path d="M31.6 11.9 V17.700000000000003 H37.4" fill="none" stroke="#c2c2c2" stroke-width="1.2"/><circle cx="33.8" cy="33.2" r="10" fill="#a7d5c1"/><path d="M28 33.2 H39 M35 28.8 L39.4 33.2 L35 37.6" stroke="#fff" stroke-width="2.2" fill="none"/></svg>
<svg class="b" style="left:426px;top:124px;" width="42" height="42" viewBox="0 0 42 42"><path d="M6.5 3.0 H27.6 L33.4 8.8 V37.5 Q33.4 38.4 32.5 38.4 H6.5 Q5.6 38.4 5.6 37.5 V3.9 Q5.6 3.0 6.5 3.0 Z" fill="#fafafa" stroke="#c2c2c2" stroke-width="1.2"/><path d="M27.6 3.0 V8.8 H33.4" fill="none" stroke="#c2c2c2" stroke-width="1.2"/><rect x="2.9" y="18.5" width="36" height="13.5" rx="1.5" fill="#e0ebfa" stroke="#abc7ec" stroke-width="1.2"/><rect x="7" y="20.6" width="25.6" height="9.2" fill="#9db8da"/></svg>
<svg class="b" style="left:652px;top:124px;" width="46" height="44" viewBox="0 0 46 44"><path d="M1.4 8.6 V4.1 Q1.4 2.6 2.9 2.6 H20.599999999999998 Q21.599999999999998 2.6 21.599999999999998 4.1 V8.6 Z" fill="#e9b463"/><rect x="2.0" y="8.2" width="37.8" height="30.400000000000002" rx="1.5" fill="#ffe3a0" stroke="#e0aa50" stroke-width="1.2"/><circle cx="32" cy="30" r="12" fill="#4ea87f"/><path d="M25.6 30 H38.4 M32 23.6 V36.4" stroke="#fff" stroke-width="2.4"/></svg>
<svg class="b" style="left:937px;top:124px;" width="40" height="44" viewBox="0 0 40 44"><path d="M3.1 3.2 H24.0 L29.8 9.0 V37.7 Q29.8 38.6 28.900000000000002 38.6 H3.1 Q2.2 38.6 2.2 37.7 V4.1 Q2.2 3.2 3.1 3.2 Z" fill="#fafafa" stroke="#c2c2c2" stroke-width="1.2"/><path d="M24.0 3.2 V9.0 H29.8" fill="none" stroke="#c2c2c2" stroke-width="1.2"/><circle cx="24.6" cy="30" r="12" fill="#e1a29c"/><path d="M19.8 25.2 L29.4 34.8 M29.4 25.2 L19.8 34.8" stroke="#fff" stroke-width="2.4"/></svg>
<svg class="b" style="left:1134px;top:124px;" width="48" height="44" viewBox="0 0 48 44"><rect x="2" y="2.6" width="37.6" height="36.4" rx="1.5" fill="#e4effb" stroke="#a3a7ab" stroke-width="1.2"/><path d="M1.4 8.6 V4 Q1.4 2 3.4 2 H38.2 Q40.2 2 40.2 4 V8.6 Z" fill="#80a9d8"/><path d="M34 17.4 L44.4 23 V33.4 L34 42.4 L23.8 33.4 V23 Z" fill="#80a6d8" stroke="#80a6d8" stroke-width="0.8" stroke-linejoin="round"/><path d="M34 19.6 L42.4 24.2 V30.4 H36.5 L34 26 Z M34 40 L25.8 32.6 V30.4 H31.6 L34 34.6 Z" fill="#e7d6a8"/></svg>
<svg class="b" style="left:1294px;top:124px;" width="48" height="44" viewBox="0 0 48 44"><path d="M1.6 8 V3.5 Q1.6 2 3.1 2 H21.0 Q22.0 2 22.0 3.5 V8 Z" fill="#f2d6a6"/><rect x="2.2" y="7.6" width="37.599999999999994" height="30.8" rx="1.5" fill="#fcedcc" stroke="#f0d9ac" stroke-width="1.2"/><rect x="6.2" y="11" width="9.6" height="15" rx="1" fill="#b9b9b9"/><rect x="8.2" y="19" width="5.6" height="4.4" fill="#f0f0f0"/><rect x="8.8" y="28" width="4.2" height="3.4" fill="#b9b9b9"/><rect x="8.8" y="33.4" width="4.2" height="3.4" fill="#b9b9b9"/><circle cx="32.6" cy="30" r="12" fill="#9fd1ba"/><path d="M38.6 30 H27 M31.4 25.4 L26.8 30 L31.4 34.6" stroke="#fff" stroke-width="2.4" fill="none"/></svg>
<svg class="b" style="left:1538px;top:124px;" width="40" height="44" viewBox="0 0 40 44"><path d="M2.9 3.2 H23.6 L29.4 9.0 V37.7 Q29.4 38.6 28.5 38.6 H2.9 Q2.0 38.6 2.0 37.7 V4.1 Q2.0 3.2 2.9 3.2 Z" fill="#fafafa" stroke="#c2c2c2" stroke-width="1.2"/><path d="M23.6 3.2 V9.0 H29.4" fill="none" stroke="#c2c2c2" stroke-width="1.2"/><circle cx="24" cy="30" r="12" fill="#9bb6d9"/><circle cx="24" cy="24.4" r="1.9" fill="#fff"/><rect x="22.3" y="28" width="3.4" height="8.6" fill="#fff"/></svg>
<svg class="b" style="left:1734px;top:124px;" width="42" height="44" viewBox="0 0 42 44"><rect x="1" y="2.2" width="39" height="6.8" rx="1.4" fill="#3e77b4"/><rect x="4" y="9" width="33.6" height="26.5" fill="#fdfdfd" stroke="#b5b5b5" stroke-width="1.2"/><rect x="7.4" y="11" width="27" height="22" fill="#3e77b4"/><path d="M25 11 A8.4 8.4 0 0 0 34.4 19.6 V11 Z" fill="#ffe3a0"/><path d="M7.4 33 V28 L14 21 L25.5 33 Z" fill="#93cfb5"/><path d="M18.5 25.7 L25 19.4 L34.4 28.6 V33 H25.5 Z" fill="#5aae88"/><rect x="2" y="35.5" width="37" height="3.6" rx="1.5" fill="#7f7f7f"/><rect x="9.6" y="39" width="22" height="3" rx="1" fill="#f0f0f0" stroke="#b5b5b5"/></svg>
<svg class="b" style="left:1563px;top:189px;" width="38" height="38" viewBox="0 0 38 38"><polygon points="19.0,1.4 24.5,12.4 36.7,14.3 27.9,22.9 29.9,35.0 19.0,29.4 8.1,35.0 10.1,22.9 1.3,14.3 13.5,12.4" fill="#eab35c" stroke="#dca751" stroke-width="1.2" stroke-linejoin="round"/></svg>
<svg class="b" style="left:1809px;top:186px;" width="42" height="40" viewBox="0 0 42 40"><path d="M1 8 V3.5 Q1 2 2.5 2 H20.2 Q21.2 2 21.2 3.5 V8 Z" fill="#e9b463"/><rect x="1.6" y="7.6" width="37.8" height="30.599999999999998" rx="1.5" fill="#ffe3a0" stroke="#e0aa50" stroke-width="1.2"/></svg>
<svg class="b" style="left:509px;top:249px;" width="30" height="30" viewBox="0 0 30 30"><path d="M26.5 15.7 H3.5 M14 4.5 L3 15.7 L14 27" fill="none" stroke="#6e90bf" stroke-width="5.8" stroke-linecap="round" stroke-linejoin="round"/><path d="M26.5 15.7 H3.5 M14 4.5 L3 15.7 L14 27" fill="none" stroke="#b7cde9" stroke-width="4.0" stroke-linecap="round" stroke-linejoin="round"/></svg>
<svg class="b" style="left:561px;top:249px;" width="30" height="30" viewBox="0 0 30 30"><path d="M4 15.7 H27 M16.5 4.5 L27.5 15.7 L16.5 27" fill="none" stroke="#6e90bf" stroke-width="5.8" stroke-linecap="round" stroke-linejoin="round"/><path d="M4 15.7 H27 M16.5 4.5 L27.5 15.7 L16.5 27" fill="none" stroke="#b7cde9" stroke-width="4.0" stroke-linecap="round" stroke-linejoin="round"/></svg>
<svg class="b" style="left:613px;top:249px;" width="30" height="32" viewBox="0 0 30 32"><path d="M15 27.3 V5.4 M3.8 16.2 L15 5 L26.2 16.2" fill="none" stroke="#000" stroke-width="5.8" stroke-linecap="round" stroke-linejoin="round"/><path d="M15 27.3 V5.4 M3.8 16.2 L15 5 L26.2 16.2" fill="none" stroke="#fff" stroke-width="4.0" stroke-linecap="round" stroke-linejoin="round"/></svg>
<svg class="b" style="left:663px;top:249px;" width="32" height="32" viewBox="0 0 32 32"><path d="M24.2 13.2 A10.4 10.4 0 1 0 24.6 20.6" fill="none" stroke="#000" stroke-width="6.2" stroke-linecap="round"/><path d="M30.6 2.2 V15.8 H16 L21.5 10.5 Z" fill="#fff" stroke="#000" stroke-width="1.2" stroke-linejoin="round"/><path d="M24.2 13.2 A10.4 10.4 0 1 0 24.6 20.6" fill="none" stroke="#fff" stroke-width="4.2" stroke-linecap="round"/><path d="M29.8 3.8 V15 H18 Z" fill="#fff"/></svg>
<svg class="b" style="left:715px;top:249px;" width="34" height="30" viewBox="0 0 34 30"><path d="M17.3 1.2 L1.2 16.6 H5.2 V28.4 H14 V17.6 H20.6 V28.4 H29.4 V16.6 H33.4 L27.6 11 V3.6 H22.6 V6.3 Z" fill="#fff" stroke="#000" stroke-width="1.1" stroke-linejoin="miter"/></svg>
<svg class="b" style="left:765px;top:257px;" width="30" height="24" viewBox="0 0 30 24"><path d="M0.7 2.6 L5.3 2 V6.2 H0.7 Z M6.2 1.9 L12 1.1 V6.2 H6.2 Z M0.7 7.1 H5.3 V11.2 L0.7 10.6 Z M6.2 7.1 H12 V11.6 L6.2 11.3 Z" fill="#10aef0"/><path d="M0.7 14.3 L14.2 7.7 L29 11.8 L10.9 17 Z" fill="url(#gdrv)"/><path d="M0.7 14.3 L10.9 17 V21.4 L0.7 18.7 Z" fill="#404040"/><path d="M10.9 17 L29 11.8 V16 L10.9 21.4 Z" fill="#b4b4b8"/><path d="M8.2 17.8 L10 18.3 V19.7 L8.2 19.2 Z" fill="#3fd055"/></svg>
<svg class="b" style="left:812.4px;top:258.5px;" width="12" height="17" viewBox="0 0 12 17"><path d="M2 2.4 L8.6 8 L2 13.6" fill="none" stroke="#000" stroke-width="3.6"/></svg>
<svg class="b" style="left:880.4px;top:258.5px;" width="12" height="17" viewBox="0 0 12 17"><path d="M2 2.4 L8.6 8 L2 13.6" fill="none" stroke="#000" stroke-width="3.6"/></svg>
<svg class="b" style="left:1103px;top:261px;" width="16" height="9" viewBox="0 0 16 9"><path d="M0 0 H16 L8 9 Z" fill="#000"/></svg>
<svg class="b" style="left:1141px;top:256px;" width="24" height="19" viewBox="0 0 24 19"><rect x="0.7" y="0" width="7.3" height="19" fill="#d5e2f2"/><path d="M11 0 L22 9.5 L11 19 Z" fill="#d5e2f2"/></svg>
<svg class="b" style="left:1176px;top:256px;" width="27" height="19" viewBox="0 0 27 19"><path d="M11.8 0 L0.6 9.5 L11.8 19 Z M15 0 L26.2 9.5 L15 19 Z" fill="#d5e2f2"/></svg>
<svg class="b" style="left:1217px;top:256px;" width="23" height="19" viewBox="0 0 23 19"><path d="M1.9 -1 L21.1 20 M21.1 -1 L1.9 20" stroke="#d5e2f2" stroke-width="5.2" fill="none"/></svg>
<svg class="b" style="left:1275px;top:249px;" width="30" height="30" viewBox="0 0 30 30"><path d="M26.5 15.7 H3.5 M14 4.5 L3 15.7 L14 27" fill="none" stroke="#777777" stroke-width="5.8" stroke-linecap="round" stroke-linejoin="round"/><path d="M26.5 15.7 H3.5 M14 4.5 L3 15.7 L14 27" fill="none" stroke="#d9d9d9" stroke-width="4.0" stroke-linecap="round" stroke-linejoin="round"/></svg>
<svg class="b" style="left:1327px;top:249px;" width="30" height="30" viewBox="0 0 30 30"><path d="M4 15.7 H27 M16.5 4.5 L27.5 15.7 L16.5 27" fill="none" stroke="#777777" stroke-width="5.8" stroke-linecap="round" stroke-linejoin="round"/><path d="M4 15.7 H27 M16.5 4.5 L27.5 15.7 L16.5 27" fill="none" stroke="#d9d9d9" stroke-width="4.0" stroke-linecap="round" stroke-linejoin="round"/></svg>
<svg class="b" style="left:1379px;top:249px;" width="30" height="32" viewBox="0 0 30 32"><path d="M15 27.3 V5.4 M3.8 16.2 L15 5 L26.2 16.2" fill="none" stroke="#000" stroke-width="5.8" stroke-linecap="round" stroke-linejoin="round"/><path d="M15 27.3 V5.4 M3.8 16.2 L15 5 L26.2 16.2" fill="none" stroke="#fff" stroke-width="4.0" stroke-linecap="round" stroke-linejoin="round"/></svg>
<svg class="b" style="left:1429px;top:249px;" width="32" height="32" viewBox="0 0 32 32"><path d="M24.2 13.2 A10.4 10.4 0 1 0 24.6 20.6" fill="none" stroke="#000" stroke-width="6.2" stroke-linecap="round"/><path d="M30.6 2.2 V15.8 H16 L21.5 10.5 Z" fill="#fff" stroke="#000" stroke-width="1.2" stroke-linejoin="round"/><path d="M24.2 13.2 A10.4 10.4 0 1 0 24.6 20.6" fill="none" stroke="#fff" stroke-width="4.2" stroke-linecap="round"/><path d="M29.8 3.8 V15 H18 Z" fill="#fff"/></svg>
<svg class="b" style="left:1481px;top:249px;" width="34" height="30" viewBox="0 0 34 30"><path d="M17.3 1.2 L1.2 16.6 H5.2 V28.4 H14 V17.6 H20.6 V28.4 H29.4 V16.6 H33.4 L27.6 11 V3.6 H22.6 V6.3 Z" fill="#fff" stroke="#000" stroke-width="1.1" stroke-linejoin="miter"/></svg>
<svg class="b" style="left:1531px;top:257px;" width="30" height="24" viewBox="0 0 30 24"><path d="M0.7 2.6 L5.3 2 V6.2 H0.7 Z M6.2 1.9 L12 1.1 V6.2 H6.2 Z M0.7 7.1 H5.3 V11.2 L0.7 10.6 Z M6.2 7.1 H12 V11.6 L6.2 11.3 Z" fill="#10aef0"/><path d="M0.7 14.3 L14.2 7.7 L29 11.8 L10.9 17 Z" fill="url(#gdrv)"/><path d="M0.7 14.3 L10.9 17 V21.4 L0.7 18.7 Z" fill="#404040"/><path d="M10.9 17 L29 11.8 V16 L10.9 21.4 Z" fill="#b4b4b8"/><path d="M8.2 17.8 L10 18.3 V19.7 L8.2 19.2 Z" fill="#3fd055"/></svg>
<svg class="b" style="left:1578.4px;top:258.5px;" width="12" height="17" viewBox="0 0 12 17"><path d="M2 2.4 L8.6 8 L2 13.6" fill="none" stroke="#000" stroke-width="3.6"/></svg>
<svg class="b" style="left:1646.4px;top:258.5px;" width="12" height="17" viewBox="0 0 12 17"><path d="M2 2.4 L8.6 8 L2 13.6" fill="none" stroke="#000" stroke-width="3.6"/></svg>
<svg class="b" style="left:1879px;top:261px;" width="16" height="9" viewBox="0 0 16 9"><path d="M0 0 H16 L8 9 Z" fill="#000"/></svg>
<svg class="b" style="left:1916px;top:256px;" width="24" height="19" viewBox="0 0 24 19"><rect x="15.2" y="0" width="7.1" height="19" fill="#e2e2e2"/><path d="M12.3 0 L1 9.5 L12.3 19 Z" fill="#e2e2e2"/></svg>
<svg class="b" style="left:1951px;top:256px;" width="26" height="19" viewBox="0 0 26 19"><path d="M12.3 0 L1 9.5 L12.3 19 Z M15.2 0 L26.5 9.5 L15.2 19 Z" fill="#e2e2e2"/></svg>
<svg class="b" style="left:1992px;top:256px;" width="23" height="19" viewBox="0 0 23 19"><path d="M1.9 -1 L21.1 20 M21.1 -1 L1.9 20" stroke="#e2e2e2" stroke-width="5.2" fill="none"/></svg>
<svg class="b" style="left:312px;top:250px;" width="24" height="24" viewBox="0 0 24 24"><circle cx="9" cy="9.2" r="6.3" fill="#e9e9e9" stroke="#000" stroke-width="2.4"/><path d="M13.8 14 L20 20.2" stroke="#000" stroke-width="4.2" stroke-linecap="round"/></svg>
<svg class="b" style="left:361px;top:250px;" width="20" height="22" viewBox="0 0 20 22"><path d="M1.5 3 H18.5" stroke="#000" stroke-width="2"/><path d="M10 20 V7.5 M4.5 12.5 L10 7 L15.5 12.5" stroke="#000" stroke-width="2" fill="none"/></svg>
<svg class="b" style="left:407px;top:257px;" width="22" height="11" viewBox="0 0 22 11"><path d="M0 0 H22 L11 11 Z" fill="#000"/></svg>
<svg class="b" style="left:454px;top:252px;" width="22" height="20" viewBox="0 0 22 20"><path d="M2.5 2 L19.5 18 M19.5 2 L2.5 18" stroke="#000" stroke-width="3.6" fill="none"/></svg>
<svg class="b" style="left:509px;top:340.5px;" width="14" height="18" viewBox="0 0 14 18"><path d="M2 1.8 L9.8 8.8 L2 15.8" fill="none" stroke="#1e2c7e" stroke-width="3.8"/></svg>
<svg class="b" style="left:536px;top:337.2px;" width="19" height="28" viewBox="0 0 19 28"><path d="M0.2 0.2 H16 V11 L18.2 13.3 V23 H5.3 V5.4 Z" fill="url(#ghb)"/><path d="M0.2 0.2 L5.7 5.3 L5.2 27 L0.2 23.6 Z" fill="url(#ghf)"/></svg>
<svg class="b" style="left:509px;top:375.5px;" width="14" height="18" viewBox="0 0 14 18"><path d="M2 1.8 L9.8 8.8 L2 15.8" fill="none" stroke="#1e2c7e" stroke-width="3.8"/></svg>
<svg class="b" style="left:536px;top:372.2px;" width="19" height="28" viewBox="0 0 19 28"><path d="M0.2 0.2 H16 V11 L18.2 13.3 V23 H5.3 V5.4 Z" fill="url(#gfb)"/><path d="M0.2 0.2 L5.7 5.3 L5.2 27 L0.2 23.6 Z" fill="url(#gff)"/></svg>
<svg class="b" style="left:509px;top:410.5px;" width="14" height="18" viewBox="0 0 14 18"><path d="M2 1.8 L9.8 8.8 L2 15.8" fill="none" stroke="#1e2c7e" stroke-width="3.8"/></svg>
<svg class="b" style="left:536px;top:407.2px;" width="19" height="28" viewBox="0 0 19 28"><path d="M0.2 0.2 H16 V11 L18.2 13.3 V23 H5.3 V5.4 Z" fill="url(#gfb)"/><path d="M0.2 0.2 L5.7 5.3 L5.2 27 L0.2 23.6 Z" fill="url(#gff)"/></svg>
<svg class="b" style="left:509px;top:445.5px;" width="14" height="18" viewBox="0 0 14 18"><path d="M2 1.8 L9.8 8.8 L2 15.8" fill="none" stroke="#1e2c7e" stroke-width="3.8"/></svg>
<svg class="b" style="left:536px;top:442.2px;" width="19" height="28" viewBox="0 0 19 28"><path d="M0.2 0.2 H16 V11 L18.2 13.3 V23 H5.3 V5.4 Z" fill="url(#gfb)"/><path d="M0.2 0.2 L5.7 5.3 L5.2 27 L0.2 23.6 Z" fill="url(#gff)"/></svg>
<svg class="b" style="left:509px;top:480.5px;" width="14" height="18" viewBox="0 0 14 18"><path d="M2 1.8 L9.8 8.8 L2 15.8" fill="none" stroke="#1e2c7e" stroke-width="3.8"/></svg>
<svg class="b" style="left:536px;top:477.2px;" width="19" height="28" viewBox="0 0 19 28"><path d="M0.2 0.2 H16 V11 L18.2 13.3 V23 H5.3 V5.4 Z" fill="url(#gfb)"/><path d="M0.2 0.2 L5.7 5.3 L5.2 27 L0.2 23.6 Z" fill="url(#gff)"/></svg>
<svg class="b" style="left:509px;top:515.5px;" width="14" height="18" viewBox="0 0 14 18"><path d="M2 1.8 L9.8 8.8 L2 15.8" fill="none" stroke="#1e2c7e" stroke-width="3.8"/></svg>
<svg class="b" style="left:536px;top:512.2px;" width="19" height="28" viewBox="0 0 19 28"><path d="M0.2 0.2 H16 V11 L18.2 13.3 V23 H5.3 V5.4 Z" fill="url(#gfb)"/><path d="M0.2 0.2 L5.7 5.3 L5.2 27 L0.2 23.6 Z" fill="url(#gff)"/></svg>
<svg class="b" style="left:509px;top:550.5px;" width="14" height="18" viewBox="0 0 14 18"><path d="M2 1.8 L9.8 8.8 L2 15.8" fill="none" stroke="#1e2c7e" stroke-width="3.8"/></svg>
<svg class="b" style="left:536px;top:547.2px;" width="19" height="28" viewBox="0 0 19 28"><path d="M0.2 0.2 H16 V11 L18.2 13.3 V23 H5.3 V5.4 Z" fill="url(#gfb)"/><path d="M0.2 0.2 L5.7 5.3 L5.2 27 L0.2 23.6 Z" fill="url(#gff)"/></svg>
<svg class="b" style="left:509px;top:585.5px;" width="14" height="18" viewBox="0 0 14 18"><path d="M2 1.8 L9.8 8.8 L2 15.8" fill="none" stroke="#1e2c7e" stroke-width="3.8"/></svg>
<svg class="b" style="left:536px;top:582.2px;" width="19" height="28" viewBox="0 0 19 28"><path d="M0.2 0.2 H16 V11 L18.2 13.3 V23 H5.3 V5.4 Z" fill="url(#gfb)"/><path d="M0.2 0.2 L5.7 5.3 L5.2 27 L0.2 23.6 Z" fill="url(#gff)"/></svg>
<svg class="b" style="left:509px;top:620.5px;" width="14" height="18" viewBox="0 0 14 18"><path d="M2 1.8 L9.8 8.8 L2 15.8" fill="none" stroke="#1e2c7e" stroke-width="3.8"/></svg>
<svg class="b" style="left:536px;top:617.2px;" width="19" height="28" viewBox="0 0 19 28"><path d="M0.2 0.2 H16 V11 L18.2 13.3 V23 H5.3 V5.4 Z" fill="url(#gfb)"/><path d="M0.2 0.2 L5.7 5.3 L5.2 27 L0.2 23.6 Z" fill="url(#gff)"/></svg>
<svg class="b" style="left:509px;top:655.5px;" width="14" height="18" viewBox="0 0 14 18"><path d="M2 1.8 L9.8 8.8 L2 15.8" fill="none" stroke="#1e2c7e" stroke-width="3.8"/></svg>
<svg class="b" style="left:536px;top:652.2px;" width="19" height="28" viewBox="0 0 19 28"><path d="M0.2 0.2 H16 V11 L18.2 13.3 V23 H5.3 V5.4 Z" fill="url(#ghb)"/><path d="M0.2 0.2 L5.7 5.3 L5.2 27 L0.2 23.6 Z" fill="url(#ghf)"/></svg>
<svg class="b" style="left:509px;top:690.5px;" width="14" height="18" viewBox="0 0 14 18"><path d="M2 1.8 L9.8 8.8 L2 15.8" fill="none" stroke="#1e2c7e" stroke-width="3.8"/></svg>
<svg class="b" style="left:536px;top:687.2px;" width="19" height="28" viewBox="0 0 19 28"><path d="M0.2 0.2 H16 V11 L18.2 13.3 V23 H5.3 V5.4 Z" fill="url(#gfb)"/><path d="M0.2 0.2 L5.7 5.3 L5.2 27 L0.2 23.6 Z" fill="url(#gff)"/></svg>
<svg class="b" style="left:509px;top:725.5px;" width="14" height="18" viewBox="0 0 14 18"><path d="M2 1.8 L9.8 8.8 L2 15.8" fill="none" stroke="#1e2c7e" stroke-width="3.8"/></svg>
<svg class="b" style="left:536px;top:722.2px;" width="19" height="28" viewBox="0 0 19 28"><path d="M0.2 0.2 H16 V11 L18.2 13.3 V23 H5.3 V5.4 Z" fill="url(#gfb)"/><path d="M0.2 0.2 L5.7 5.3 L5.2 27 L0.2 23.6 Z" fill="url(#gff)"/></svg>
<svg class="b" style="left:509px;top:760.5px;" width="14" height="18" viewBox="0 0 14 18"><path d="M2 1.8 L9.8 8.8 L2 15.8" fill="none" stroke="#1e2c7e" stroke-width="3.8"/></svg>
<svg class="b" style="left:536px;top:757.2px;" width="19" height="28" viewBox="0 0 19 28"><path d="M0.2 0.2 H16 V11 L18.2 13.3 V23 H5.3 V5.4 Z" fill="url(#gfb)"/><path d="M0.2 0.2 L5.7 5.3 L5.2 27 L0.2 23.6 Z" fill="url(#gff)"/></svg>
<svg class="b" style="left:509px;top:795.5px;" width="14" height="18" viewBox="0 0 14 18"><path d="M2 1.8 L9.8 8.8 L2 15.8" fill="none" stroke="#1e2c7e" stroke-width="3.8"/></svg>
<svg class="b" style="left:536px;top:792.2px;" width="19" height="28" viewBox="0 0 19 28"><path d="M0.2 0.2 H16 V11 L18.2 13.3 V23 H5.3 V5.4 Z" fill="url(#gfb)"/><path d="M0.2 0.2 L5.7 5.3 L5.2 27 L0.2 23.6 Z" fill="url(#gff)"/></svg>
<svg class="b" style="left:536px;top:825.3px;" width="22" height="28" viewBox="0 0 22 28"><path d="M0.6 0.6 H15.5 L20.5 5.6 V27 H0.6 Z" fill="url(#gpg)" stroke="#d2d2d2" stroke-width="1.1"/><path d="M15.5 0.6 V5.6 H20.5" fill="none" stroke="#d2d2d2" stroke-width="1.1"/></svg>
<svg class="b" style="left:536px;top:860.3px;" width="22" height="28" viewBox="0 0 22 28"><path d="M0.6 0.6 H15.5 L20.5 5.6 V27 H0.6 Z" fill="url(#gpg)" stroke="#9c9c9c" stroke-width="1.1"/><path d="M15.5 0.6 V5.6 H20.5" fill="none" stroke="#9c9c9c" stroke-width="1.1"/><circle cx="8" cy="11.6" r="3.3" fill="none" stroke="#8a939c" stroke-width="1.2"/><circle cx="8" cy="11.6" r="4.9" fill="none" stroke="#8a939c" stroke-width="1.7" stroke-dasharray="1.6 1.5"/><circle cx="14.8" cy="18.8" r="2.3" fill="#c6ccd2" stroke="#8a939c" stroke-width="1.1"/><circle cx="14.8" cy="18.8" r="3.6" fill="none" stroke="#8a939c" stroke-width="1.4" stroke-dasharray="1.4 1.3"/></svg>
<svg class="b" style="left:536px;top:895.3px;" width="22" height="28" viewBox="0 0 22 28"><path d="M0.6 0.6 H15.5 L20.5 5.6 V27 H0.6 Z" fill="url(#gpg)" stroke="#9c9c9c" stroke-width="1.1"/><path d="M15.5 0.6 V5.6 H20.5" fill="none" stroke="#9c9c9c" stroke-width="1.1"/></svg>
<svg class="b" style="left:536px;top:930.3px;" width="22" height="28" viewBox="0 0 22 28"><path d="M0.6 0.6 H15.5 L20.5 5.6 V27 H0.6 Z" fill="url(#gpg)" stroke="#9c9c9c" stroke-width="1.1"/><path d="M15.5 0.6 V5.6 H20.5" fill="none" stroke="#9c9c9c" stroke-width="1.1"/><circle cx="8" cy="11.6" r="3.3" fill="none" stroke="#8a939c" stroke-width="1.2"/><circle cx="8" cy="11.6" r="4.9" fill="none" stroke="#8a939c" stroke-width="1.7" stroke-dasharray="1.6 1.5"/><circle cx="14.8" cy="18.8" r="2.3" fill="#c6ccd2" stroke="#8a939c" stroke-width="1.1"/><circle cx="14.8" cy="18.8" r="3.6" fill="none" stroke="#8a939c" stroke-width="1.4" stroke-dasharray="1.4 1.3"/></svg>
<svg class="b" style="left:536px;top:965.3px;" width="22" height="28" viewBox="0 0 22 28"><path d="M0.6 0.6 H15.5 L20.5 5.6 V27 H0.6 Z" fill="url(#gpg)" stroke="#9c9c9c" stroke-width="1.1"/><path d="M15.5 0.6 V5.6 H20.5" fill="none" stroke="#9c9c9c" stroke-width="1.1"/><rect x="3" y="5.2" width="10.5" height="1.2" fill="#9a9a9a"/><rect x="3" y="8.3" width="15" height="1.2" fill="#9a9a9a"/><rect x="3" y="11.4" width="15" height="1.2" fill="#9a9a9a"/><rect x="3" y="14.5" width="15" height="1.2" fill="#9a9a9a"/><rect x="3" y="17.6" width="15" height="1.2" fill="#9a9a9a"/><rect x="3" y="20.7" width="15" height="1.2" fill="#9a9a9a"/><rect x="3" y="23.8" width="15" height="1.2" fill="#9a9a9a"/></svg>
<svg class="b" style="left:1275px;top:340.5px;" width="14" height="18" viewBox="0 0 14 18"><path d="M2 1.8 L9.8 8.8 L2 15.8" fill="none" stroke="#1e2c7e" stroke-width="3.8"/></svg>
<svg class="b" style="left:1302px;top:337.2px;" width="19" height="28" viewBox="0 0 19 28"><path d="M0.2 0.2 H16 V11 L18.2 13.3 V23 H5.3 V5.4 Z" fill="url(#ghb)"/><path d="M0.2 0.2 L5.7 5.3 L5.2 27 L0.2 23.6 Z" fill="url(#ghf)"/></svg>
<svg class="b" style="left:1275px;top:375.5px;" width="14" height="18" viewBox="0 0 14 18"><path d="M2 1.8 L9.8 8.8 L2 15.8" fill="none" stroke="#1e2c7e" stroke-width="3.8"/></svg>
<svg class="b" style="left:1302px;top:372.2px;" width="19" height="28" viewBox="0 0 19 28"><path d="M0.2 0.2 H16 V11 L18.2 13.3 V23 H5.3 V5.4 Z" fill="url(#gfb)"/><path d="M0.2 0.2 L5.7 5.3 L5.2 27 L0.2 23.6 Z" fill="url(#gff)"/></svg>
<svg class="b" style="left:1275px;top:410.5px;" width="14" height="18" viewBox="0 0 14 18"><path d="M2 1.8 L9.8 8.8 L2 15.8" fill="none" stroke="#1e2c7e" stroke-width="3.8"/></svg>
<svg class="b" style="left:1302px;top:407.2px;" width="19" height="28" viewBox="0 0 19 28"><path d="M0.2 0.2 H16 V11 L18.2 13.3 V23 H5.3 V5.4 Z" fill="url(#gfb)"/><path d="M0.2 0.2 L5.7 5.3 L5.2 27 L0.2 23.6 Z" fill="url(#gff)"/></svg>
<svg class="b" style="left:1275px;top:445.5px;" width="14" height="18" viewBox="0 0 14 18"><path d="M2 1.8 L9.8 8.8 L2 15.8" fill="none" stroke="#1e2c7e" stroke-width="3.8"/></svg>
<svg class="b" style="left:1302px;top:442.2px;" width="19" height="28" viewBox="0 0 19 28"><path d="M0.2 0.2 H16 V11 L18.2 13.3 V23 H5.3 V5.4 Z" fill="url(#gfb)"/><path d="M0.2 0.2 L5.7 5.3 L5.2 27 L0.2 23.6 Z" fill="url(#gff)"/></svg>
<svg class="b" style="left:1275px;top:480.5px;" width="14" height="18" viewBox="0 0 14 18"><path d="M2 1.8 L9.8 8.8 L2 15.8" fill="none" stroke="#1e2c7e" stroke-width="3.8"/></svg>
<svg class="b" style="left:1302px;top:477.2px;" width="19" height="28" viewBox="0 0 19 28"><path d="M0.2 0.2 H16 V11 L18.2 13.3 V23 H5.3 V5.4 Z" fill="url(#gfb)"/><path d="M0.2 0.2 L5.7 5.3 L5.2 27 L0.2 23.6 Z" fill="url(#gff)"/></svg>
<svg class="b" style="left:1275px;top:515.5px;" width="14" height="18" viewBox="0 0 14 18"><path d="M2 1.8 L9.8 8.8 L2 15.8" fill="none" stroke="#1e2c7e" stroke-width="3.8"/></svg>
<svg class="b" style="left:1302px;top:512.2px;" width="19" height="28" viewBox="0 0 19 28"><path d="M0.2 0.2 H16 V11 L18.2 13.3 V23 H5.3 V5.4 Z" fill="url(#gfb)"/><path d="M0.2 0.2 L5.7 5.3 L5.2 27 L0.2 23.6 Z" fill="url(#gff)"/></svg>
<svg class="b" style="left:1275px;top:550.5px;" width="14" height="18" viewBox="0 0 14 18"><path d="M2 1.8 L9.8 8.8 L2 15.8" fill="none" stroke="#1e2c7e" stroke-width="3.8"/></svg>
<svg class="b" style="left:1302px;top:547.2px;" width="19" height="28" viewBox="0 0 19 28"><path d="M0.2 0.2 H16 V11 L18.2 13.3 V23 H5.3 V5.4 Z" fill="url(#gfb)"/><path d="M0.2 0.2 L5.7 5.3 L5.2 27 L0.2 23.6 Z" fill="url(#gff)"/></svg>
<svg class="b" style="left:1275px;top:585.5px;" width="14" height="18" viewBox="0 0 14 18"><path d="M2 1.8 L9.8 8.8 L2 15.8" fill="none" stroke="#1e2c7e" stroke-width="3.8"/></svg>
<svg class="b" style="left:1302px;top:582.2px;" width="19" height="28" viewBox="0 0 19 28"><path d="M0.2 0.2 H16 V11 L18.2 13.3 V23 H5.3 V5.4 Z" fill="url(#gfb)"/><path d="M0.2 0.2 L5.7 5.3 L5.2 27 L0.2 23.6 Z" fill="url(#gff)"/></svg>
<svg class="b" style="left:1275px;top:620.5px;" width="14" height="18" viewBox="0 0 14 18"><path d="M2 1.8 L9.8 8.8 L2 15.8" fill="none" stroke="#1e2c7e" stroke-width="3.8"/></svg>
<svg class="b" style="left:1302px;top:617.2px;" width="19" height="28" viewBox="0 0 19 28"><path d="M0.2 0.2 H16 V11 L18.2 13.3 V23 H5.3 V5.4 Z" fill="url(#gfb)"/><path d="M0.2 0.2 L5.7 5.3 L5.2 27 L0.2 23.6 Z" fill="url(#gff)"/></svg>
<svg class="b" style="left:1275px;top:655.5px;" width="14" height="18" viewBox="0 0 14 18"><path d="M2 1.8 L9.8 8.8 L2 15.8" fill="none" stroke="#1e2c7e" stroke-width="3.8"/></svg>
<svg class="b" style="left:1302px;top:652.2px;" width="19" height="28" viewBox="0 0 19 28"><path d="M0.2 0.2 H16 V11 L18.2 13.3 V23 H5.3 V5.4 Z" fill="url(#ghb)"/><path d="M0.2 0.2 L5.7 5.3 L5.2 27 L0.2 23.6 Z" fill="url(#ghf)"/></svg>
<svg class="b" style="left:1275px;top:690.5px;" width="14" height="18" viewBox="0 0 14 18"><path d="M2 1.8 L9.8 8.8 L2 15.8" fill="none" stroke="#1e2c7e" stroke-width="3.8"/></svg>
<svg class="b" style="left:1302px;top:687.2px;" width="19" height="28" viewBox="0 0 19 28"><path d="M0.2 0.2 H16 V11 L18.2 13.3 V23 H5.3 V5.4 Z" fill="url(#gfb)"/><path d="M0.2 0.2 L5.7 5.3 L5.2 27 L0.2 23.6 Z" fill="url(#gff)"/></svg>
<svg class="b" style="left:1275px;top:725.5px;" width="14" height="18" viewBox="0 0 14 18"><path d="M2 1.8 L9.8 8.8 L2 15.8" fill="none" stroke="#1e2c7e" stroke-width="3.8"/></svg>
<svg class="b" style="left:1302px;top:722.2px;" width="19" height="28" viewBox="0 0 19 28"><path d="M0.2 0.2 H16 V11 L18.2 13.3 V23 H5.3 V5.4 Z" fill="url(#gfb)"/><path d="M0.2 0.2 L5.7 5.3 L5.2 27 L0.2 23.6 Z" fill="url(#gff)"/></svg>
<svg class="b" style="left:1275px;top:760.5px;" width="14" height="18" viewBox="0 0 14 18"><path d="M2 1.8 L9.8 8.8 L2 15.8" fill="none" stroke="#1e2c7e" stroke-width="3.8"/></svg>
<svg class="b" style="left:1302px;top:757.2px;" width="19" height="28" viewBox="0 0 19 28"><path d="M0.2 0.2 H16 V11 L18.2 13.3 V23 H5.3 V5.4 Z" fill="url(#gfb)"/><path d="M0.2 0.2 L5.7 5.3 L5.2 27 L0.2 23.6 Z" fill="url(#gff)"/></svg>
<svg class="b" style="left:1275px;top:795.5px;" width="14" height="18" viewBox="0 0 14 18"><path d="M2 1.8 L9.8 8.8 L2 15.8" fill="none" stroke="#1e2c7e" stroke-width="3.8"/></svg>
<svg class="b" style="left:1302px;top:792.2px;" width="19" height="28" viewBox="0 0 19 28"><path d="M0.2 0.2 H16 V11 L18.2 13.3 V23 H5.3 V5.4 Z" fill="url(#gfb)"/><path d="M0.2 0.2 L5.7 5.3 L5.2 27 L0.2 23.6 Z" fill="url(#gff)"/></svg>
<svg class="b" style="left:1302px;top:825.3px;" width="22" height="28" viewBox="0 0 22 28"><path d="M0.6 0.6 H15.5 L20.5 5.6 V27 H0.6 Z" fill="url(#gpg)" stroke="#d2d2d2" stroke-width="1.1"/><path d="M15.5 0.6 V5.6 H20.5" fill="none" stroke="#d2d2d2" stroke-width="1.1"/></svg>
<svg class="b" style="left:1302px;top:860.3px;" width="22" height="28" viewBox="0 0 22 28"><path d="M0.6 0.6 H15.5 L20.5 5.6 V27 H0.6 Z" fill="url(#gpg)" stroke="#9c9c9c" stroke-width="1.1"/><path d="M15.5 0.6 V5.6 H20.5" fill="none" stroke="#9c9c9c" stroke-width="1.1"/><circle cx="8" cy="11.6" r="3.3" fill="none" stroke="#8a939c" stroke-width="1.2"/><circle cx="8" cy="11.6" r="4.9" fill="none" stroke="#8a939c" stroke-width="1.7" stroke-dasharray="1.6 1.5"/><circle cx="14.8" cy="18.8" r="2.3" fill="#c6ccd2" stroke="#8a939c" stroke-width="1.1"/><circle cx="14.8" cy="18.8" r="3.6" fill="none" stroke="#8a939c" stroke-width="1.4" stroke-dasharray="1.4 1.3"/></svg>
<svg class="b" style="left:1302px;top:895.3px;" width="22" height="28" viewBox="0 0 22 28"><path d="M0.6 0.6 H15.5 L20.5 5.6 V27 H0.6 Z" fill="url(#gpg)" stroke="#9c9c9c" stroke-width="1.1"/><path d="M15.5 0.6 V5.6 H20.5" fill="none" stroke="#9c9c9c" stroke-width="1.1"/></svg>
<svg class="b" style="left:1302px;top:930.3px;" width="22" height="28" viewBox="0 0 22 28"><path d="M0.6 0.6 H15.5 L20.5 5.6 V27 H0.6 Z" fill="url(#gpg)" stroke="#9c9c9c" stroke-width="1.1"/><path d="M15.5 0.6 V5.6 H20.5" fill="none" stroke="#9c9c9c" stroke-width="1.1"/><circle cx="8" cy="11.6" r="3.3" fill="none" stroke="#8a939c" stroke-width="1.2"/><circle cx="8" cy="11.6" r="4.9" fill="none" stroke="#8a939c" stroke-width="1.7" stroke-dasharray="1.6 1.5"/><circle cx="14.8" cy="18.8" r="2.3" fill="#c6ccd2" stroke="#8a939c" stroke-width="1.1"/><circle cx="14.8" cy="18.8" r="3.6" fill="none" stroke="#8a939c" stroke-width="1.4" stroke-dasharray="1.4 1.3"/></svg>
<svg class="b" style="left:1302px;top:965.3px;" width="22" height="28" viewBox="0 0 22 28"><path d="M0.6 0.6 H15.5 L20.5 5.6 V27 H0.6 Z" fill="url(#gpg)" stroke="#9c9c9c" stroke-width="1.1"/><path d="M15.5 0.6 V5.6 H20.5" fill="none" stroke="#9c9c9c" stroke-width="1.1"/><rect x="3" y="5.2" width="10.5" height="1.2" fill="#9a9a9a"/><rect x="3" y="8.3" width="15" height="1.2" fill="#9a9a9a"/><rect x="3" y="11.4" width="15" height="1.2" fill="#9a9a9a"/><rect x="3" y="14.5" width="15" height="1.2" fill="#9a9a9a"/><rect x="3" y="17.6" width="15" height="1.2" fill="#9a9a9a"/><rect x="3" y="20.7" width="15" height="1.2" fill="#9a9a9a"/><rect x="3" y="23.8" width="15" height="1.2" fill="#9a9a9a"/></svg>
<svg class="b" style="left:22px;top:290px;" width="32" height="28" viewBox="0 0 32 28"><g transform="translate(17 14.6) skewX(-14) translate(-17 -14.6)"><polygon points="17.0,1.9 20.1,10.6 29.3,10.8 21.9,16.4 24.6,25.2 17.0,20.0 9.4,25.2 12.1,16.4 4.7,10.8 13.9,10.6" fill="#1d8fea"/><polygon points="16.4,5.6 18.5,11.4 24.6,11.5 19.7,15.3 21.5,21.2 16.4,17.7 11.3,21.2 13.1,15.3 8.2,11.5 14.3,11.4" fill="#35a6f7"/></g><path d="M9 3.4 H18 M7.6 5.6 H15.5 M8.6 7.8 H13" stroke="#7cc4f7" stroke-width="1.1"/><path d="M0.5 20.8 H8.5 M3.5 18.4 H9.5 M4.5 23 H8" stroke="#9ad2f9" stroke-width="1.1"/></svg>
<svg class="b" style="left:24px;top:350px;" width="30" height="30" viewBox="0 0 30 30"><path d="M1.6 1.2 H17.6 V11 L19 13 V22 H6.8 V6 Z" fill="url(#gfb)"/><path d="M1.6 1.2 L7.2 6.2 L6.7 26 L1.6 22.6 Z" fill="url(#gff)"/><g transform="translate(18.6 19) scale(0.82 1) translate(-18.6 -19)"><polygon points="21.3,8.9 22.8,16.1 30.0,17.4 23.7,21.1 24.7,28.4 19.2,23.5 12.6,26.7 15.6,19.9 10.5,14.6 17.8,15.4" fill="#e8602a"/><polygon points="20.0,8.9 21.6,15.9 28.6,17.2 22.5,20.9 23.4,28.0 18.0,23.3 11.5,26.3 14.4,19.7 9.4,14.5 16.6,15.2" fill="#fbc838"/><polygon points="18.4,12.7 19.4,16.1 22.9,17.1 19.9,19.1 20.1,22.8 17.2,20.6 13.8,21.9 15.0,18.5 12.7,15.6 16.4,15.7" fill="#fde9a0" opacity="0.8"/></g></svg>
<svg class="b" style="left:23px;top:413px;" width="29" height="21" viewBox="0 0 29 21"><rect x="0.3" y="0.5" width="27.6" height="19.2" fill="url(#gdesk)" stroke="#1583dc" stroke-width="0.6"/><path d="M0 19.5 L14 0.5 H19 L4 19.5 Z" fill="#fff" opacity="0.08"/><rect x="0.3" y="17.4" width="27.6" height="2.2" fill="#0f7fd8"/><rect x="1.4" y="17.9" width="20" height="0.9" fill="#0a5fa8"/><path d="M1.2 18.5 h1 M22.3 18.5 h1.1 m0.8 0 h1.1 m0.8 0 h1.1" stroke="#fff" stroke-width="1"/></svg>
<svg class="b" style="left:41px;top:447px;" width="32" height="24" viewBox="0 0 32 24"><g clip-path="url(#cwps)"><circle cx="24.4" cy="15.2" r="7.6" fill="url(#gwb)"/><rect x="10" y="12" width="14.4" height="10.8" fill="url(#gwb)"/><circle cx="16" cy="8.6" r="7.5" fill="#1fa4fc"/><path d="M12 10 L21.5 9.5 L19 16 L10 22.8 H8 Z" fill="#1696f6"/><circle cx="10" cy="14.6" r="8.9" fill="url(#gteal)"/><path d="M12.5 6.2 L19.4 14.2 L10.5 22.8 H8 L9 10 Z" fill="url(#gteal)"/></g></svg>
<svg class="b" style="left:40px;top:483px;" width="34" height="23" viewBox="0 0 34 23"><circle cx="17.4" cy="9.2" r="7.9" fill="#0a5fb6"/><path d="M17 6 L30 12 L26 20 H12 Z" fill="#0a5fb6"/><circle cx="8.2" cy="14.5" r="7.2" fill="#0f76d0"/><path d="M8 7.3 L18 10 L10 21.7 H8 Z" fill="#0f76d0"/><circle cx="26.4" cy="14.9" r="6.8" fill="#1886dc"/><path d="M17 12 L26 8.2 L28 21.7 H14 Z" fill="#1886dc"/><path d="M1.8 18 L17 11 L32.4 18.4 Q31.4 21.8 27 21.8 H8 Q2.8 21.8 1.8 18 Z" fill="#2ba6ea"/></svg>
<svg class="b" style="left:45.4px;top:519.2px;" width="19" height="28" viewBox="0 0 19 28"><path d="M0.2 0.2 H16 V11 L18.2 13.3 V23 H5.3 V5.4 Z" fill="url(#gfb)"/><path d="M0.2 0.2 L5.7 5.3 L5.2 27 L0.2 23.6 Z" fill="url(#gff)"/></svg>
<svg class="b" style="left:45.4px;top:555.2px;" width="19" height="28" viewBox="0 0 19 28"><path d="M0.2 0.2 H16 V11 L18.2 13.3 V23 H5.3 V5.4 Z" fill="url(#gfb)"/><path d="M0.2 0.2 L5.7 5.3 L5.2 27 L0.2 23.6 Z" fill="url(#gff)"/></svg>
<svg class="b" style="left:45.4px;top:591.2px;" width="19" height="28" viewBox="0 0 19 28"><path d="M0.2 0.2 H16 V11 L18.2 13.3 V23 H5.3 V5.4 Z" fill="url(#gfb)"/><path d="M0.2 0.2 L5.7 5.3 L5.2 27 L0.2 23.6 Z" fill="url(#gff)"/></svg>
<svg class="b" style="left:41px;top:625px;" width="32" height="29" viewBox="0 0 32 29"><path d="M10.3 1.1 L30.3 7.4 V20.2 L10.3 14.3 Z" fill="url(#gscr)" stroke="#5f7486" stroke-width="0.8" stroke-linejoin="round"/><path d="M15.5 20.4 L21 17.8 L28 20 L24 22.4 Z" fill="#dfe4ea"/><path d="M0.7 22.3 L8.8 19.6 L24.3 25.3 L16.5 27.7 Z" fill="#e3e7ec"/><path d="M3.5 22.4 L18 27 M6.2 21.4 L20.6 26.2 M5 23.6 L10.6 21.4 M9 25 L14.6 22.6 M13 26.3 L18.6 24" stroke="#c6ccd3" stroke-width="0.7"/></svg>
<svg class="b" style="left:62px;top:667px;" width="30" height="24" viewBox="0 0 30 24"><path d="M0.7 2.6 L5.3 2 V6.2 H0.7 Z M6.2 1.9 L12 1.1 V6.2 H6.2 Z M0.7 7.1 H5.3 V11.2 L0.7 10.6 Z M6.2 7.1 H12 V11.6 L6.2 11.3 Z" fill="#10aef0"/><path d="M0.7 14.3 L14.2 7.7 L29 11.8 L10.9 17 Z" fill="url(#gdrv)"/><path d="M0.7 14.3 L10.9 17 V21.4 L0.7 18.7 Z" fill="#404040"/><path d="M10.9 17 L29 11.8 V16 L10.9 21.4 Z" fill="#b4b4b8"/><path d="M8.2 17.8 L10 18.3 V19.7 L8.2 19.2 Z" fill="#3fd055"/></svg>
<svg class="b" style="left:62px;top:703px;" width="30" height="24" viewBox="0 0 30 24"><path d="M0.7 14.3 L14.2 7.7 L29 11.8 L10.9 17 Z" fill="url(#gdrv)"/><path d="M0.7 14.3 L10.9 17 V21.4 L0.7 18.7 Z" fill="#404040"/><path d="M10.9 17 L29 11.8 V16 L10.9 21.4 Z" fill="#b4b4b8"/><path d="M8.2 17.8 L10 18.3 V19.7 L8.2 19.2 Z" fill="#3fd055"/></svg>
<svg class="b" style="left:62px;top:739px;" width="30" height="24" viewBox="0 0 30 24"><path d="M0.7 14.3 L14.2 7.7 L29 11.8 L10.9 17 Z" fill="url(#gdrv)"/><path d="M0.7 14.3 L10.9 17 V21.4 L0.7 18.7 Z" fill="#404040"/><path d="M10.9 17 L29 11.8 V16 L10.9 21.4 Z" fill="#b4b4b8"/><path d="M8.2 17.8 L10 18.3 V19.7 L8.2 19.2 Z" fill="#3fd055"/></svg>
<svg class="b" style="left:43px;top:768px;" width="30" height="30" viewBox="0 0 30 30"><circle cx="17.6" cy="11.4" r="10.2" fill="url(#gglb)"/><path d="M9.5 6.5 Q12 3 16 2.4 Q14.5 5 12.6 6.6 Q11.4 9 9 10 Q8.4 8 9.5 6.5 Z M17.5 2 Q21 1.8 23.4 3.6 Q22 5.4 19.6 4.6 Z M23.6 6 Q26.6 8 27 12 Q26 15 24.6 14 Q25 10 23.6 8.6 Z" fill="#e2f2f6" opacity="0.85"/><path d="M1.1 9.3 L19.4 14.9 V26.5 L1.1 20.9 Z" fill="url(#gscr)" stroke="#c9c4b8" stroke-width="0.9" stroke-linejoin="round"/><path d="M7.5 23.4 L13 25 V26.6 L7.5 25.2 Z" fill="#c5ccd3"/><ellipse cx="10.9" cy="27.3" rx="5.6" ry="1.5" fill="#d5dbe1"/></svg>
<svg class="b" style="left:44px;top:804px;" width="26" height="30" viewBox="0 0 26 30"><path d="M0.3 5.6 L8 3.2 L25 5.1 L17 7.6 Z" fill="#dfe2e6"/><path d="M2 5 L5 2.4 L8.4 3.4 L10.6 0.9 L14.4 2.2 L17.6 1.2 L20.4 3.4 L23.4 3.8 L24.4 5.2 L17 7.4 L1 5.7 Z" fill="#f1f2f4" stroke="#d3d6da" stroke-width="0.5"/><path d="M0.3 5.6 L17 7.6 L15.6 29 L3 26.7 Z" fill="#eef0f2"/><path d="M17 7.6 L25 5.1 L22.6 26.2 L15.6 29 Z" fill="#d9dce0"/><path d="M0.3 5.6 L17 7.6 L25 5.1" fill="none" stroke="#c9cdd2" stroke-width="0.7"/><g fill="none" stroke="#1c7fe2" stroke-width="2.1"><path d="M4.6 16.6 L6.4 13.4 L9 14.2"/><path d="M10.4 14.6 L12 17.4 L10.6 19"/><path d="M9.4 21 L6.2 20.6 L5 18.4"/></g><path d="M8 12.4 L11 14 L8.6 16 Z M12.6 19.6 L10 21.6 L9.6 18.4 Z M3.4 18 L6.4 17.6 L5.2 20.6 Z" fill="#1c7fe2"/></svg>
<svg class="b" style="left:22px;top:864px;" width="31" height="30" viewBox="0 0 31 30"><path d="M7 1 H26.5 V21 L28.8 23 V28.5 H7 Z" fill="#f9dc84" stroke="#e2b64c" stroke-width="0.9"/><rect x="9" y="2.6" width="15.6" height="2" fill="#fbe7a6"/><rect x="1.2" y="4.6" width="20" height="24" fill="#fff" stroke="#8f9499" stroke-width="1"/><rect x="3" y="6.4" width="16.4" height="20.4" fill="url(#gfc)"/><rect x="25.2" y="21.4" width="2" height="5" rx="0.8" fill="#fff" stroke="#e2b64c" stroke-width="0.5"/><rect x="25.6" y="24" width="1.3" height="1.6" fill="#3a8fe0"/></svg>
<svg class="b" style="left:22px;top:926px;" width="31" height="26" viewBox="0 0 31 26"><path d="M1.2 4 V2.4 Q1.2 1.2 2.4 1.2 H11 Q12 1.2 12.6 2 L13.6 3.4 H28.2 Q29.2 3.4 29.2 4.4 V23.6 H1.2 Z" fill="#e6a817"/><path d="M1.2 4.6 H11.4 L13 3.4 H28.2 Q29.2 3.4 29.2 4.4 V23.6 H1.2 Z" fill="#fdd566"/><path d="M6 24.5 V15 Q6 14 7 14 H23.4 Q24.4 14 24.4 15 V24.5 H19.4 V18.8 H10.9 V24.5 Z" fill="#1d86e2"/><rect x="6" y="14" width="18.4" height="1.6" rx="0.8" fill="#1668c0"/></svg>
<svg class="b" style="left:21px;top:983px;" width="32" height="31" viewBox="0 0 32 31"><circle cx="13" cy="13" r="12" fill="#3c78b8"/><path d="M5 6 Q8 3 11.5 3.4 Q13 5 11 7 Q9.6 8 9.8 10 Q8 11.6 6.4 10.4 Q4.6 8.4 5 6 Z M6.4 14.6 Q8.6 13.6 9.4 15.6 Q9.6 18.6 8 20.6 Q6 19 6.4 14.6 Z M15 2.6 Q18.4 3 20.4 5 Q18.6 6.6 16.4 5.6 Z" fill="#8fcfa8"/><rect x="13.4" y="10.4" width="17" height="13.6" rx="1" fill="#fafafa" stroke="#7d7d7d" stroke-width="1.3"/><rect x="15.6" y="12.6" width="12.6" height="9.2" fill="#93cfb5" stroke="#5aae88" stroke-width="0.8"/><rect x="19.4" y="24" width="5" height="3.2" fill="#d5d5d5" stroke="#8a8a8a" stroke-width="0.7"/><rect x="15.4" y="27.2" width="13" height="2.6" rx="0.8" fill="#f0f0f0" stroke="#8a8a8a" stroke-width="0.8"/></svg>
<svg class="b" style="left:0px;top:5px;" width="34" height="36" viewBox="0 0 34 36"><circle cx="12.8" cy="15" r="12.3" fill="url(#gdisc)" stroke="#3f3f9c" stroke-width="1.5"/><path d="M4.5 12 A9.5 9.5 0 0 1 14 4.6" fill="none" stroke="#fff3c0" stroke-width="1.1" opacity="0.7"/><path d="M7 14 A6.5 6.5 0 0 1 14.5 7.6" fill="none" stroke="#fff3c0" stroke-width="0.9" opacity="0.6"/><polygon points="21.6,14.6 30.8,20.6 18,34 10.8,24.2" fill="#ebebf2" stroke="#2e2e8c" stroke-width="1.7" stroke-linejoin="round"/><polygon points="22,16.6 28.6,20.9 24.5,25.2 18.5,20.6" fill="#fafafc"/><polygon points="16.6,22.2 20.8,25 19.6,27 15.6,24.2" fill="#2b2bd2"/></svg>
</body></html>
